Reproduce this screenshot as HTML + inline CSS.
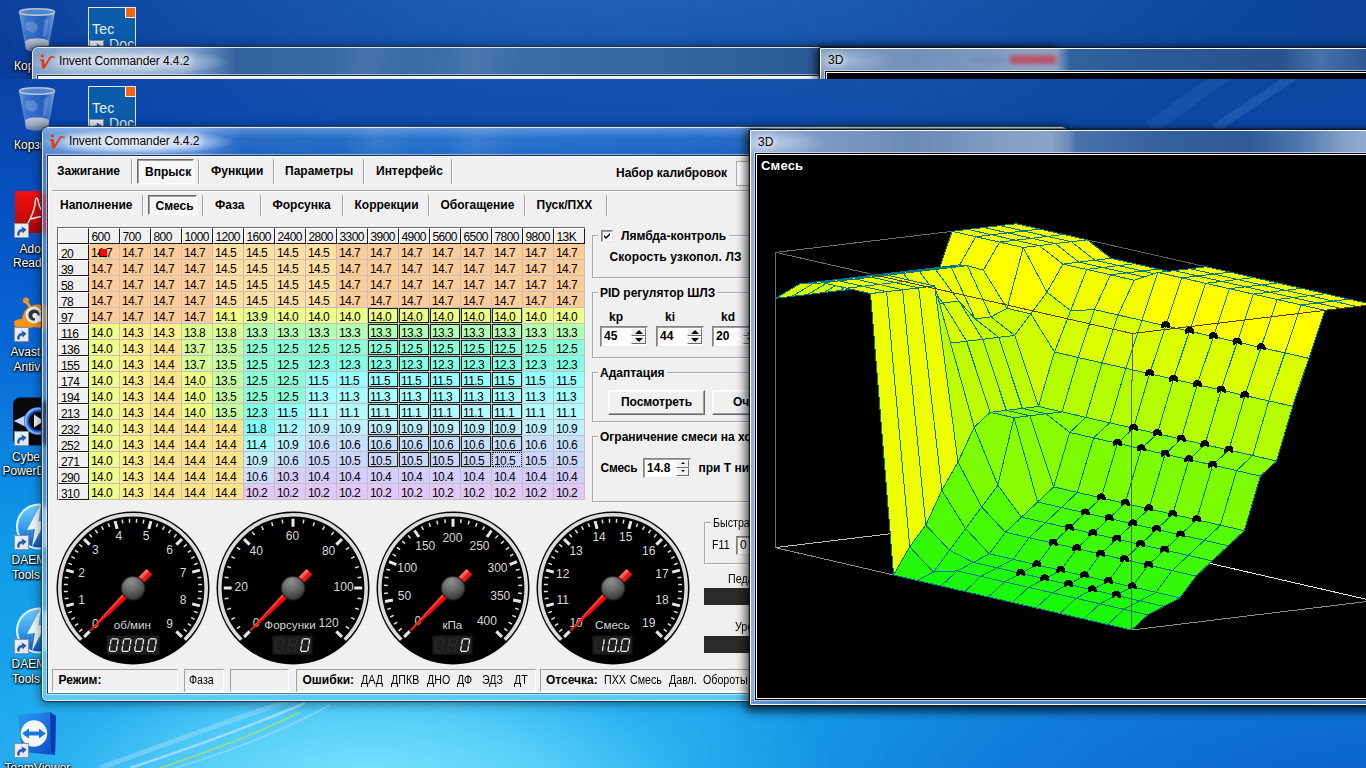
<!DOCTYPE html><html><head><meta charset="utf-8"><title>screen</title><style>
*{box-sizing:border-box;margin:0;padding:0}
html,body{width:1366px;height:768px;overflow:hidden;background:#0b4aa8;font-family:"Liberation Sans",sans-serif;font-size:12px;color:#000}
.abs{position:absolute}
#desk{position:absolute;left:0;top:0;width:1366px;height:768px;overflow:hidden;
 background:
  radial-gradient(ellipse 470px 210px at 370px 800px, rgba(128,234,255,1), rgba(96,212,250,.9) 38%, rgba(60,185,244,.45) 70%, rgba(40,170,240,0) 100%),
  radial-gradient(ellipse 760px 260px at 1400px 800px, rgba(8,84,196,.9), rgba(10,96,206,.6) 55%, rgba(16,120,220,0) 100%),
  radial-gradient(ellipse 700px 260px at 620px -60px, rgba(40,110,190,.75), rgba(30,100,190,0) 100%),
  radial-gradient(ellipse 520px 170px at 1150px 70px, rgba(12,74,150,.55), rgba(12,74,150,0) 100%),
  linear-gradient(180deg,#0a3f9e 0,#0a47ae 130px,#0650c0 200px,#0864d4 330px,#0c80e0 440px,#109ae8 540px,#18a6ec 700px,#1aa8ee 768px);}
.b{font-weight:bold}
.nw{white-space:nowrap}
.t{position:absolute;white-space:nowrap;line-height:14px}
.ilbl{position:absolute;color:#fff;font-size:12px;line-height:15px;white-space:nowrap;text-shadow:0 1px 2px #000,0 0 3px #000,1px 1px 1px rgba(0,0,0,.8)}
.sep{position:absolute;width:2px;border-left:1px solid #a0a0a0;border-right:1px solid #fff}
.gb{position:absolute;border:1px solid #a8a8a8;box-shadow:inset 1px 1px 0 #fff, 1px 1px 0 #fff}
.gb>.lg{position:absolute;top:-7px;left:7px;background:#f0f0f0;padding:0 2px;font-weight:bold;white-space:nowrap;line-height:14px}
.sunk{position:absolute;border:1px solid;border-color:#a0a0a0 #fff #fff #a0a0a0;}
.edit{position:absolute;background:#fff;border:1px solid;border-color:#828282 #e8e8e8 #e8e8e8 #828282;box-shadow:inset 1px 1px 0 #a0a0a0}
.btn{position:absolute;background:#f0f0f0;border:1px solid;border-color:#fff #696969 #696969 #fff;box-shadow:inset -1px -1px 0 #a0a0a0,inset 1px 1px 0 #f8f8f8;font-weight:bold;text-align:center}
.nx{display:inline-block;transform-origin:0 50%;transform:scaleX(.89)}
</style></head><body>
<div id="desk">
<svg class="abs" style="left:0;top:0" width="1366" height="768">
<defs><linearGradient id="stk" x1="0" y1="1" x2="1" y2="0"><stop offset="0" stop-color="#fff" stop-opacity=".0"/><stop offset=".5" stop-color="#bfe8ff" stop-opacity=".35"/><stop offset="1" stop-color="#fff" stop-opacity="0"/></linearGradient></defs>
<path d="M130,768 Q230,735 305,703" stroke="#e8f8ff" stroke-opacity=".5" stroke-width="2.5" fill="none"/>
<path d="M160,768 Q250,738 300,712" stroke="#a6e070" stroke-opacity=".85" stroke-width="1.6" fill="none"/>
<path d="M100,768 Q210,728 290,700" stroke="#d0f0ff" stroke-opacity=".3" stroke-width="5" fill="none"/>
<path d="M175,768 Q262,742 330,705" stroke="#d8f4ff" stroke-opacity=".3" stroke-width="2" fill="none"/>
<path d="M1215,128 L1366,28" stroke="#7fb0e6" stroke-opacity=".16" stroke-width="9" fill="none"/>
<path d="M1150,128 L1330,0" stroke="#7fb0e6" stroke-opacity=".1" stroke-width="14" fill="none"/>
<path d="M1260,78 L1366,8" stroke="#a8ccf0" stroke-opacity=".14" stroke-width="3" fill="none"/>
</svg>
<svg class="abs" style="left:16px;top:85px" width="42" height="48" viewBox="0 0 42 48">
<defs><linearGradient id="rba" x1="0" y1="0" x2="1" y2="0"><stop offset="0" stop-color="#86b2e6" stop-opacity=".85"/><stop offset=".2" stop-color="#4a82d6" stop-opacity=".75"/><stop offset=".7" stop-color="#3468c4" stop-opacity=".7"/><stop offset="1" stop-color="#8cb6ea" stop-opacity=".85"/></linearGradient>
<linearGradient id="rca" x1="0" y1="0" x2="0" y2="1"><stop offset="0" stop-color="#dcdcdc"/><stop offset=".5" stop-color="#b4b8c0"/><stop offset="1" stop-color="#7c8088"/></linearGradient></defs>
<path d="M3,6 L39,6 L32,44 Q21,48 10,44 Z" fill="url(#rba)"/>
<path d="M9,35.5 Q12,32 21,32.5 Q30,32 33,35.5 L32,43.5 Q21,47.5 10,43.5Z" fill="url(#rca)" fill-opacity=".82"/>
<ellipse cx="21" cy="6" rx="17.5" ry="3.2" fill="#4c86d8" stroke="#bcc0c8" stroke-width="1.5"/>
<path d="M9,18 q2,-4 6,-2 q3,-2 5,2 q3,2 1,6 q-3,4 -7,2 q-5,-2 -5,-8z" fill="#9cc0f0" fill-opacity=".35"/>
<path d="M28,14 L33,12 L30,30 L27,32Z" fill="#a8c8f4" fill-opacity=".3"/>
</svg><div class="ilbl" style="left:14px;top:137.5px">Корзина</div><div class="abs" style="left:88px;top:86px;width:48px;height:48px;background:#0b5cab;border:1px solid #dfe8f4;overflow:hidden">
<div class="abs" style="right:0;top:0;width:10px;height:10px;background:#f06414;border-left:1px solid #fff;border-bottom:1px solid #fff"></div>
<div class="abs" style="left:3px;top:14px;color:#e8f0ff;font-size:14px;line-height:14px;letter-spacing:.2px">Tec</div>
<div class="abs" style="left:20px;top:29px;color:#e8f0ff;font-size:14px;line-height:14px;letter-spacing:.2px">Doc</div>
</div><svg class="abs" style="left:89px;top:119px" width="15" height="15" viewBox="0 0 15 15"><rect x=".5" y=".5" width="14" height="14" fill="#e4ecf8" stroke="#8a8f98"/><path d="M3.2,12.5 Q2.6,6.2 8,6 L7.6,3.4 L12.6,6.6 L8.6,10.6 L8.3,8.6 Q5.2,8.6 5.6,12.5 Z" fill="#2a56a8"/><path d="M8.5,11.5 q2,.6 3.5,-.6 l0,2 l-4,0z" fill="#f2d8cc"/></svg><div class="abs" style="left:15px;top:191px;width:44px;height:42px;background:linear-gradient(180deg,#f41010 0,#d40c0c 50%,#a80606 100%)"><svg width="44" height="42" viewBox="0 0 44 42" style="position:absolute;left:0;top:0"><path d="M12,34 Q20,20 20.5,9 Q21.5,5 23,9 Q24,16 29,24 M16,28 Q22,26 30,25" stroke="#fff" stroke-width="1.4" fill="none"/></svg></div><svg class="abs" style="left:13.5px;top:222.5px" width="15" height="15" viewBox="0 0 15 15"><rect x=".5" y=".5" width="14" height="14" fill="#e4ecf8" stroke="#8a8f98"/><path d="M3.2,12.5 Q2.6,6.2 8,6 L7.6,3.4 L12.6,6.6 L8.6,10.6 L8.3,8.6 Q5.2,8.6 5.6,12.5 Z" fill="#2a56a8"/><path d="M8.5,11.5 q2,.6 3.5,-.6 l0,2 l-4,0z" fill="#f2d8cc"/></svg><div class="ilbl" style="left:19.5px;top:241.5px">Adobe</div><div class="ilbl" style="left:13px;top:256px">Reader XI</div><svg class="abs" style="left:12px;top:296px" width="48" height="36" viewBox="0 0 48 36"><circle cx="14" cy="4.5" r="3" fill="#f89412"/><path d="M14,5 L18,11" stroke="#f89412" stroke-width="3"/><path d="M2,27 q0,-4 8,-4 q2,-12 12,-14 q12,-2 18,6 q4,8 -2,14 q-8,4 -16,2 q-8,2 -14,1 q-6,0 -6,-5z" fill="#f89412"/><circle cx="22" cy="19" r="8.3" fill="#fff"/><circle cx="22" cy="19" r="7" fill="#d8dce0"/><circle cx="22" cy="19" r="5.6" fill="#2c3640"/><circle cx="23" cy="19.5" r="2.6" fill="#fff"/><rect x="23" y="19.5" width="6" height="6" fill="#fff"/></svg><svg class="abs" style="left:13.5px;top:326.5px" width="15" height="15" viewBox="0 0 15 15"><rect x=".5" y=".5" width="14" height="14" fill="#e4ecf8" stroke="#8a8f98"/><path d="M3.2,12.5 Q2.6,6.2 8,6 L7.6,3.4 L12.6,6.6 L8.6,10.6 L8.3,8.6 Q5.2,8.6 5.6,12.5 Z" fill="#2a56a8"/><path d="M8.5,11.5 q2,.6 3.5,-.6 l0,2 l-4,0z" fill="#f2d8cc"/></svg><div class="ilbl" style="left:10.5px;top:345px">Avast</div><div class="ilbl" style="left:13.5px;top:360px">Antivirus</div><svg class="abs" style="left:13px;top:397px" width="48" height="49" viewBox="0 0 48 49"><defs><radialGradient id="pd1" cx=".5" cy=".5" r=".5"><stop offset=".6" stop-color="#0a1a60"/><stop offset=".78" stop-color="#2a7cf4"/><stop offset=".9" stop-color="#9cc8ff"/><stop offset="1" stop-color="#1c50c0"/></radialGradient></defs><rect x="0" y="0.5" width="48" height="48" rx="7" fill="#0a0a0c"/><path d="M1,24 L14,18 L14,30Z" fill="#e8f0ff"/><path d="M1,24 L20,14 L20,34Z" fill="#a8c4f8" fill-opacity=".6"/><circle cx="25" cy="24" r="14" fill="url(#pd1)"/><circle cx="25" cy="24" r="8.8" fill="#0c0c10"/><path d="M21,17.5 L31,24 L21,30.5Z" fill="#f0f0f0"/></svg><svg class="abs" style="left:13.5px;top:431px" width="15" height="15" viewBox="0 0 15 15"><rect x=".5" y=".5" width="14" height="14" fill="#e4ecf8" stroke="#8a8f98"/><path d="M3.2,12.5 Q2.6,6.2 8,6 L7.6,3.4 L12.6,6.6 L8.6,10.6 L8.3,8.6 Q5.2,8.6 5.6,12.5 Z" fill="#2a56a8"/><path d="M8.5,11.5 q2,.6 3.5,-.6 l0,2 l-4,0z" fill="#f2d8cc"/></svg><div class="ilbl" style="left:12px;top:449.5px">CyberLink</div><div class="ilbl" style="left:2.5px;top:464px">PowerDVD 12</div><svg class="abs" style="left:13px;top:503px" width="52" height="48" viewBox="0 0 52 48"><defs><linearGradient id="dm0" x1="0" y1="0" x2="0" y2="1"><stop offset="0" stop-color="#6cd0fa"/><stop offset=".5" stop-color="#3a9cec"/><stop offset="1" stop-color="#1058b8"/></linearGradient></defs>
<circle cx="26" cy="23.5" r="23" fill="#eaf4fc"/><circle cx="26" cy="23.5" r="21" fill="url(#dm0)"/>
<path d="M28,1 L14,27 L22,26 L19,44 L33,17 L25.5,18.5 Z" fill="#f4f8fc"/></svg><svg class="abs" style="left:13.5px;top:534.5px" width="15" height="15" viewBox="0 0 15 15"><rect x=".5" y=".5" width="14" height="14" fill="#e4ecf8" stroke="#8a8f98"/><path d="M3.2,12.5 Q2.6,6.2 8,6 L7.6,3.4 L12.6,6.6 L8.6,10.6 L8.3,8.6 Q5.2,8.6 5.6,12.5 Z" fill="#2a56a8"/><path d="M8.5,11.5 q2,.6 3.5,-.6 l0,2 l-4,0z" fill="#f2d8cc"/></svg><div class="ilbl" style="left:11.5px;top:553px">DAEMON</div><div class="ilbl" style="left:12px;top:568px">Tools Lite</div><svg class="abs" style="left:13px;top:607px" width="52" height="48" viewBox="0 0 52 48"><defs><linearGradient id="dm1" x1="0" y1="0" x2="0" y2="1"><stop offset="0" stop-color="#6cd0fa"/><stop offset=".5" stop-color="#3a9cec"/><stop offset="1" stop-color="#1058b8"/></linearGradient></defs>
<circle cx="26" cy="23.5" r="23" fill="#eaf4fc"/><circle cx="26" cy="23.5" r="21" fill="url(#dm1)"/>
<path d="M28,1 L14,27 L22,26 L19,44 L33,17 L25.5,18.5 Z" fill="#f4f8fc"/></svg><svg class="abs" style="left:13.5px;top:638.5px" width="15" height="15" viewBox="0 0 15 15"><rect x=".5" y=".5" width="14" height="14" fill="#e4ecf8" stroke="#8a8f98"/><path d="M3.2,12.5 Q2.6,6.2 8,6 L7.6,3.4 L12.6,6.6 L8.6,10.6 L8.3,8.6 Q5.2,8.6 5.6,12.5 Z" fill="#2a56a8"/><path d="M8.5,11.5 q2,.6 3.5,-.6 l0,2 l-4,0z" fill="#f2d8cc"/></svg><div class="ilbl" style="left:11.5px;top:657px">DAEMON</div><div class="ilbl" style="left:12px;top:672px">Tools Lite</div><svg class="abs" style="left:17px;top:711px" width="40" height="46" viewBox="0 0 40 46"><defs><linearGradient id="tv1" x1="0" y1="0" x2="1" y2="1"><stop offset="0" stop-color="#2a9cf4"/><stop offset="1" stop-color="#0c48c0"/></linearGradient></defs><path d="M1,4 L33,1 L39,5 L38,44 L5,41Z" fill="url(#tv1)"/><path d="M33,1 L39,5 L38,44 L34,40Z" fill="#0a3cb0"/><circle cx="17" cy="22.5" r="13.2" fill="#f4f8fc"/><path d="M5,22.5 L12,17.5 L12,20.5 L22,20.5 L22,17.5 L29,22.5 L22,27.5 L22,24.5 L12,24.5 L12,27.5Z" fill="#1a78e0"/></svg><svg class="abs" style="left:13.5px;top:742.5px" width="15" height="15" viewBox="0 0 15 15"><rect x=".5" y=".5" width="14" height="14" fill="#e4ecf8" stroke="#8a8f98"/><path d="M3.2,12.5 Q2.6,6.2 8,6 L7.6,3.4 L12.6,6.6 L8.6,10.6 L8.3,8.6 Q5.2,8.6 5.6,12.5 Z" fill="#2a56a8"/><path d="M8.5,11.5 q2,.6 3.5,-.6 l0,2 l-4,0z" fill="#f2d8cc"/></svg><div class="ilbl" style="left:4.5px;top:760.5px">TeamViewer</div>
<div class="abs" style="left:41px;top:126px;width:1028px;height:576px;border-radius:7px 7px 6px 6px;border:1px solid rgba(20,30,50,.75);box-shadow:0 0 0 1px rgba(0,0,0,.08),0 1px 10px 2px rgba(0,0,0,.35);background:linear-gradient(90deg,rgba(255,255,255,.0) 0,rgba(255,255,255,0) 100%),linear-gradient(180deg,rgba(90,150,225,.0) 0,rgba(90,150,225,0) 28px,rgba(70,170,240,.3) 60%,rgba(100,222,255,.8) 100%),linear-gradient(90deg,rgba(74,128,208,1) 0,rgba(60,125,205,1) 100%);overflow:hidden"><div class="abs" style="left:0;top:0;right:0;bottom:0;border-radius:6px 6px 5px 5px;border:1px solid rgba(255,255,255,.8)"></div><div class="abs" style="left:1px;top:66px;width:6px;height:40px;background:#d02828;filter:blur(2px);opacity:.7"></div><div class="abs" style="left:1px;top:178px;width:6px;height:24px;background:#f09a28;filter:blur(2px);opacity:.7"></div><div class="abs" style="left:1px;top:274px;width:6px;height:44px;background:#10141c;filter:blur(2px);opacity:.7"></div><div class="abs" style="left:1px;top:380px;width:6px;height:40px;background:#d8ecfc;filter:blur(2px);opacity:.7"></div><div class="abs" style="left:1px;top:484px;width:6px;height:40px;background:#d8ecfc;filter:blur(2px);opacity:.7"></div><div class="abs" style="left:1px;top:1px;width:1026px;height:28px;background:radial-gradient(ellipse 100px 13px at 92px 14px,rgba(228,238,250,.95) 0,rgba(206,222,244,.85) 55%,rgba(150,190,235,0) 100%),linear-gradient(180deg,rgba(255,255,255,.28) 0,rgba(255,255,255,.05) 10px,rgba(255,255,255,0) 100%),linear-gradient(100deg,rgba(255,255,255,0) 300px,rgba(255,255,255,.07) 330px,rgba(255,255,255,0) 370px,rgba(255,255,255,0) 400px,rgba(255,255,255,.07) 430px,rgba(255,255,255,0) 470px),linear-gradient(90deg,rgba(84,138,214,1) 0,rgba(98,150,222,1) 40px,rgba(88,144,222,1) 150px,rgba(52,114,204,1) 178px,rgba(30,100,194,1) 200px,rgba(30,104,198,1) 300px,rgba(34,110,204,1) 420px,rgba(28,98,194,1) 720px,rgba(120,150,200,1) 730px,rgba(120,150,200,1) 100%)"></div><svg class="abs" style="left:6.5px;top:7px" width="18" height="17" viewBox="0 0 17 16"><circle cx="3.2" cy="1.7" r="1.5" fill="#e8380c"/><path d="M0.6,5.2 L4.6,4.6 L5.4,10.2 L9.6,3.2 Q10.2,2.2 11.4,2.2 L14.8,2.0 L14.6,3.6 L11.8,3.8 Q11.2,3.8 10.8,4.6 L5.2,14 L3.0,14 L2.2,6.4 L0.8,6.6 Z" fill="#e8380c"/></svg><div class="t" style="left:27px;top:7px;font-size:12px;letter-spacing:-.08px;text-shadow:0 0 6px #fff,0 0 8px #fff,0 0 10px rgba(255,255,255,.9)">Invent Commander 4.4.2</div></div><div class="abs" style="left:46px;top:154px;width:1016px;height:541px;border:1px solid rgba(255,255,255,.5);background:#f0f0f0;background-clip:padding-box"><div class="abs" style="left:0;top:0;right:0;bottom:0;border:1px solid #26374f;border-top-color:#1c2c44;border-bottom-color:#4a86a8"></div><div class="abs" style="left:1px;top:1px;right:1px;bottom:1px;border:1px solid #fff;border-right:0;border-bottom-color:#fdfdfd"></div></div><div class="t b" style="left:57px;top:164px;">Зажигание</div><div class="t b" style="left:211px;top:164px;">Функции</div><div class="t b" style="left:285px;top:164px;">Параметры</div><div class="t b" style="left:376px;top:164px;">Интерфейс</div><div class="sep" style="left:131px;top:159px;height:25px"></div><div class="sep" style="left:198px;top:159px;height:25px"></div><div class="sep" style="left:273px;top:159px;height:25px"></div><div class="sep" style="left:363px;top:159px;height:25px"></div><div class="sep" style="left:451px;top:159px;height:25px"></div><div class="abs" style="left:137px;top:159px;width:57px;height:25px;border:1px solid;border-color:#696969 #fff #fff #696969;box-shadow:inset 1px 1px 0 #a0a0a0;background:#f6f6f6"></div><div class="t b" style="left:145px;top:165px;">Впрыск</div><div class="t b" style="left:616px;top:166px;">Набор калибровок</div><div class="abs" style="left:736px;top:161px;width:40px;height:25px;background:#fff;border:1px solid #a8a8a8"></div><div class="abs" style="left:52px;top:190px;width:720px;height:2px;border-top:1px solid #a0a0a0;border-bottom:1px solid #fff"></div><div class="t b" style="left:60px;top:198px;">Наполнение</div><div class="t b" style="left:215px;top:198px;">Фаза</div><div class="t b" style="left:272.5px;top:198px;">Форсунка</div><div class="t b" style="left:354.5px;top:198px;">Коррекции</div><div class="t b" style="left:440.5px;top:198px;">Обогащение</div><div class="t b" style="left:536.5px;top:198px;">Пуск/ПХХ</div><div class="sep" style="left:142px;top:195px;height:21px"></div><div class="sep" style="left:202px;top:195px;height:21px"></div><div class="sep" style="left:260px;top:195px;height:21px"></div><div class="sep" style="left:342px;top:195px;height:21px"></div><div class="sep" style="left:428px;top:195px;height:21px"></div><div class="sep" style="left:524px;top:195px;height:21px"></div><div class="sep" style="left:606px;top:195px;height:21px"></div><div class="abs" style="left:148px;top:195px;width:49px;height:20px;border:1px solid;border-color:#696969 #fff #fff #696969;box-shadow:inset 1px 1px 0 #a0a0a0;background:#f6f6f6"></div><div class="t b" style="left:155.5px;top:199px;">Смесь</div><div class="abs" style="left:57px;top:227px;width:528px;height:273px;background:#c0c0c0;border-left:1px solid #696969;border-top:1px solid #696969;font-size:12px;letter-spacing:-.6px;line-height:15px"><div style="position:absolute;background:#f0f0f0;border:1px solid;border-color:#fff #1c1c1c #1c1c1c #fff;padding-left:1.5px;padding-top:2px;height:16px;overflow:hidden;white-space:nowrap;left:0;top:0;width:31px"></div><div style="position:absolute;background:#f0f0f0;border:1px solid;border-color:#fff #1c1c1c #1c1c1c #fff;padding-left:1.5px;padding-top:2px;height:16px;overflow:hidden;white-space:nowrap;left:31px;top:0;width:31px;padding-top:1px">600</div><div style="position:absolute;background:#f0f0f0;border:1px solid;border-color:#fff #1c1c1c #1c1c1c #fff;padding-left:1.5px;padding-top:2px;height:16px;overflow:hidden;white-space:nowrap;left:62px;top:0;width:31px;padding-top:1px">700</div><div style="position:absolute;background:#f0f0f0;border:1px solid;border-color:#fff #1c1c1c #1c1c1c #fff;padding-left:1.5px;padding-top:2px;height:16px;overflow:hidden;white-space:nowrap;left:93px;top:0;width:31px;padding-top:1px">800</div><div style="position:absolute;background:#f0f0f0;border:1px solid;border-color:#fff #1c1c1c #1c1c1c #fff;padding-left:1.5px;padding-top:2px;height:16px;overflow:hidden;white-space:nowrap;left:124px;top:0;width:31px;padding-top:1px">1000</div><div style="position:absolute;background:#f0f0f0;border:1px solid;border-color:#fff #1c1c1c #1c1c1c #fff;padding-left:1.5px;padding-top:2px;height:16px;overflow:hidden;white-space:nowrap;left:155px;top:0;width:31px;padding-top:1px">1200</div><div style="position:absolute;background:#f0f0f0;border:1px solid;border-color:#fff #1c1c1c #1c1c1c #fff;padding-left:1.5px;padding-top:2px;height:16px;overflow:hidden;white-space:nowrap;left:186px;top:0;width:31px;padding-top:1px">1600</div><div style="position:absolute;background:#f0f0f0;border:1px solid;border-color:#fff #1c1c1c #1c1c1c #fff;padding-left:1.5px;padding-top:2px;height:16px;overflow:hidden;white-space:nowrap;left:217px;top:0;width:31px;padding-top:1px">2400</div><div style="position:absolute;background:#f0f0f0;border:1px solid;border-color:#fff #1c1c1c #1c1c1c #fff;padding-left:1.5px;padding-top:2px;height:16px;overflow:hidden;white-space:nowrap;left:248px;top:0;width:31px;padding-top:1px">2800</div><div style="position:absolute;background:#f0f0f0;border:1px solid;border-color:#fff #1c1c1c #1c1c1c #fff;padding-left:1.5px;padding-top:2px;height:16px;overflow:hidden;white-space:nowrap;left:279px;top:0;width:31px;padding-top:1px">3300</div><div style="position:absolute;background:#f0f0f0;border:1px solid;border-color:#fff #1c1c1c #1c1c1c #fff;padding-left:1.5px;padding-top:2px;height:16px;overflow:hidden;white-space:nowrap;left:310px;top:0;width:31px;padding-top:1px">3900</div><div style="position:absolute;background:#f0f0f0;border:1px solid;border-color:#fff #1c1c1c #1c1c1c #fff;padding-left:1.5px;padding-top:2px;height:16px;overflow:hidden;white-space:nowrap;left:341px;top:0;width:31px;padding-top:1px">4900</div><div style="position:absolute;background:#f0f0f0;border:1px solid;border-color:#fff #1c1c1c #1c1c1c #fff;padding-left:1.5px;padding-top:2px;height:16px;overflow:hidden;white-space:nowrap;left:372px;top:0;width:31px;padding-top:1px">5600</div><div style="position:absolute;background:#f0f0f0;border:1px solid;border-color:#fff #1c1c1c #1c1c1c #fff;padding-left:1.5px;padding-top:2px;height:16px;overflow:hidden;white-space:nowrap;left:403px;top:0;width:31px;padding-top:1px">6500</div><div style="position:absolute;background:#f0f0f0;border:1px solid;border-color:#fff #1c1c1c #1c1c1c #fff;padding-left:1.5px;padding-top:2px;height:16px;overflow:hidden;white-space:nowrap;left:434px;top:0;width:31px;padding-top:1px">7800</div><div style="position:absolute;background:#f0f0f0;border:1px solid;border-color:#fff #1c1c1c #1c1c1c #fff;padding-left:1.5px;padding-top:2px;height:16px;overflow:hidden;white-space:nowrap;left:465px;top:0;width:31px;padding-top:1px">9800</div><div style="position:absolute;background:#f0f0f0;border:1px solid;border-color:#fff #1c1c1c #1c1c1c #fff;padding-left:1.5px;padding-top:2px;height:16px;overflow:hidden;white-space:nowrap;left:496px;top:0;width:31px;padding-top:1px">13K</div><div style="position:absolute;background:#f0f0f0;border:1px solid;border-color:#fff #1c1c1c #1c1c1c #fff;padding-left:1.5px;padding-top:2px;height:16px;overflow:hidden;white-space:nowrap;left:0;top:16px;width:31px;padding-left:2px">20</div><div style="position:absolute;background:#f0f0f0;border:1px solid;border-color:#fff #1c1c1c #1c1c1c #fff;padding-left:1.5px;padding-top:2px;height:16px;overflow:hidden;white-space:nowrap;left:0;top:32px;width:31px;padding-left:2px">39</div><div style="position:absolute;background:#f0f0f0;border:1px solid;border-color:#fff #1c1c1c #1c1c1c #fff;padding-left:1.5px;padding-top:2px;height:16px;overflow:hidden;white-space:nowrap;left:0;top:48px;width:31px;padding-left:2px">58</div><div style="position:absolute;background:#f0f0f0;border:1px solid;border-color:#fff #1c1c1c #1c1c1c #fff;padding-left:1.5px;padding-top:2px;height:16px;overflow:hidden;white-space:nowrap;left:0;top:64px;width:31px;padding-left:2px">78</div><div style="position:absolute;background:#f0f0f0;border:1px solid;border-color:#fff #1c1c1c #1c1c1c #fff;padding-left:1.5px;padding-top:2px;height:16px;overflow:hidden;white-space:nowrap;left:0;top:80px;width:31px;padding-left:2px">97</div><div style="position:absolute;background:#f0f0f0;border:1px solid;border-color:#fff #1c1c1c #1c1c1c #fff;padding-left:1.5px;padding-top:2px;height:16px;overflow:hidden;white-space:nowrap;left:0;top:96px;width:31px;padding-left:2px">116</div><div style="position:absolute;background:#f0f0f0;border:1px solid;border-color:#fff #1c1c1c #1c1c1c #fff;padding-left:1.5px;padding-top:2px;height:16px;overflow:hidden;white-space:nowrap;left:0;top:112px;width:31px;padding-left:2px">136</div><div style="position:absolute;background:#f0f0f0;border:1px solid;border-color:#fff #1c1c1c #1c1c1c #fff;padding-left:1.5px;padding-top:2px;height:16px;overflow:hidden;white-space:nowrap;left:0;top:128px;width:31px;padding-left:2px">155</div><div style="position:absolute;background:#f0f0f0;border:1px solid;border-color:#fff #1c1c1c #1c1c1c #fff;padding-left:1.5px;padding-top:2px;height:16px;overflow:hidden;white-space:nowrap;left:0;top:144px;width:31px;padding-left:2px">174</div><div style="position:absolute;background:#f0f0f0;border:1px solid;border-color:#fff #1c1c1c #1c1c1c #fff;padding-left:1.5px;padding-top:2px;height:16px;overflow:hidden;white-space:nowrap;left:0;top:160px;width:31px;padding-left:2px">194</div><div style="position:absolute;background:#f0f0f0;border:1px solid;border-color:#fff #1c1c1c #1c1c1c #fff;padding-left:1.5px;padding-top:2px;height:16px;overflow:hidden;white-space:nowrap;left:0;top:176px;width:31px;padding-left:2px">213</div><div style="position:absolute;background:#f0f0f0;border:1px solid;border-color:#fff #1c1c1c #1c1c1c #fff;padding-left:1.5px;padding-top:2px;height:16px;overflow:hidden;white-space:nowrap;left:0;top:192px;width:31px;padding-left:2px">232</div><div style="position:absolute;background:#f0f0f0;border:1px solid;border-color:#fff #1c1c1c #1c1c1c #fff;padding-left:1.5px;padding-top:2px;height:16px;overflow:hidden;white-space:nowrap;left:0;top:208px;width:31px;padding-left:2px">252</div><div style="position:absolute;background:#f0f0f0;border:1px solid;border-color:#fff #1c1c1c #1c1c1c #fff;padding-left:1.5px;padding-top:2px;height:16px;overflow:hidden;white-space:nowrap;left:0;top:224px;width:31px;padding-left:2px">271</div><div style="position:absolute;background:#f0f0f0;border:1px solid;border-color:#fff #1c1c1c #1c1c1c #fff;padding-left:1.5px;padding-top:2px;height:16px;overflow:hidden;white-space:nowrap;left:0;top:240px;width:31px;padding-left:2px">290</div><div style="position:absolute;background:#f0f0f0;border:1px solid;border-color:#fff #1c1c1c #1c1c1c #fff;padding-left:1.5px;padding-top:2px;height:16px;overflow:hidden;white-space:nowrap;left:0;top:256px;width:31px;padding-left:2px">310</div><div style="position:absolute;left:31px;top:16px;width:30px;height:15px;background:#ffcc99;padding-left:2px;padding-top:2px;overflow:hidden;white-space:nowrap">14.7</div><div style="position:absolute;left:62px;top:16px;width:30px;height:15px;background:#ffcc99;padding-left:2px;padding-top:2px;overflow:hidden;white-space:nowrap">14.7</div><div style="position:absolute;left:93px;top:16px;width:30px;height:15px;background:#ffcc99;padding-left:2px;padding-top:2px;overflow:hidden;white-space:nowrap">14.7</div><div style="position:absolute;left:124px;top:16px;width:30px;height:15px;background:#ffcc99;padding-left:2px;padding-top:2px;overflow:hidden;white-space:nowrap">14.7</div><div style="position:absolute;left:155px;top:16px;width:30px;height:15px;background:#ffe0a0;padding-left:2px;padding-top:2px;overflow:hidden;white-space:nowrap">14.5</div><div style="position:absolute;left:186px;top:16px;width:30px;height:15px;background:#ffe0a0;padding-left:2px;padding-top:2px;overflow:hidden;white-space:nowrap">14.5</div><div style="position:absolute;left:217px;top:16px;width:30px;height:15px;background:#ffe0a0;padding-left:2px;padding-top:2px;overflow:hidden;white-space:nowrap">14.5</div><div style="position:absolute;left:248px;top:16px;width:30px;height:15px;background:#ffe0a0;padding-left:2px;padding-top:2px;overflow:hidden;white-space:nowrap">14.5</div><div style="position:absolute;left:279px;top:16px;width:30px;height:15px;background:#ffcc99;padding-left:2px;padding-top:2px;overflow:hidden;white-space:nowrap">14.7</div><div style="position:absolute;left:310px;top:16px;width:30px;height:15px;background:#ffcc99;padding-left:2px;padding-top:2px;overflow:hidden;white-space:nowrap">14.7</div><div style="position:absolute;left:341px;top:16px;width:30px;height:15px;background:#ffcc99;padding-left:2px;padding-top:2px;overflow:hidden;white-space:nowrap">14.7</div><div style="position:absolute;left:372px;top:16px;width:30px;height:15px;background:#ffcc99;padding-left:2px;padding-top:2px;overflow:hidden;white-space:nowrap">14.7</div><div style="position:absolute;left:403px;top:16px;width:30px;height:15px;background:#ffcc99;padding-left:2px;padding-top:2px;overflow:hidden;white-space:nowrap">14.7</div><div style="position:absolute;left:434px;top:16px;width:30px;height:15px;background:#ffcc99;padding-left:2px;padding-top:2px;overflow:hidden;white-space:nowrap">14.7</div><div style="position:absolute;left:465px;top:16px;width:30px;height:15px;background:#ffcc99;padding-left:2px;padding-top:2px;overflow:hidden;white-space:nowrap">14.7</div><div style="position:absolute;left:496px;top:16px;width:30px;height:15px;background:#ffcc99;padding-left:2px;padding-top:2px;overflow:hidden;white-space:nowrap">14.7</div><div style="position:absolute;left:31px;top:32px;width:30px;height:15px;background:#ffcc99;padding-left:2px;padding-top:2px;overflow:hidden;white-space:nowrap">14.7</div><div style="position:absolute;left:62px;top:32px;width:30px;height:15px;background:#ffcc99;padding-left:2px;padding-top:2px;overflow:hidden;white-space:nowrap">14.7</div><div style="position:absolute;left:93px;top:32px;width:30px;height:15px;background:#ffcc99;padding-left:2px;padding-top:2px;overflow:hidden;white-space:nowrap">14.7</div><div style="position:absolute;left:124px;top:32px;width:30px;height:15px;background:#ffcc99;padding-left:2px;padding-top:2px;overflow:hidden;white-space:nowrap">14.7</div><div style="position:absolute;left:155px;top:32px;width:30px;height:15px;background:#ffe0a0;padding-left:2px;padding-top:2px;overflow:hidden;white-space:nowrap">14.5</div><div style="position:absolute;left:186px;top:32px;width:30px;height:15px;background:#ffe0a0;padding-left:2px;padding-top:2px;overflow:hidden;white-space:nowrap">14.5</div><div style="position:absolute;left:217px;top:32px;width:30px;height:15px;background:#ffe0a0;padding-left:2px;padding-top:2px;overflow:hidden;white-space:nowrap">14.5</div><div style="position:absolute;left:248px;top:32px;width:30px;height:15px;background:#ffe0a0;padding-left:2px;padding-top:2px;overflow:hidden;white-space:nowrap">14.5</div><div style="position:absolute;left:279px;top:32px;width:30px;height:15px;background:#ffcc99;padding-left:2px;padding-top:2px;overflow:hidden;white-space:nowrap">14.7</div><div style="position:absolute;left:310px;top:32px;width:30px;height:15px;background:#ffcc99;padding-left:2px;padding-top:2px;overflow:hidden;white-space:nowrap">14.7</div><div style="position:absolute;left:341px;top:32px;width:30px;height:15px;background:#ffcc99;padding-left:2px;padding-top:2px;overflow:hidden;white-space:nowrap">14.7</div><div style="position:absolute;left:372px;top:32px;width:30px;height:15px;background:#ffcc99;padding-left:2px;padding-top:2px;overflow:hidden;white-space:nowrap">14.7</div><div style="position:absolute;left:403px;top:32px;width:30px;height:15px;background:#ffcc99;padding-left:2px;padding-top:2px;overflow:hidden;white-space:nowrap">14.7</div><div style="position:absolute;left:434px;top:32px;width:30px;height:15px;background:#ffcc99;padding-left:2px;padding-top:2px;overflow:hidden;white-space:nowrap">14.7</div><div style="position:absolute;left:465px;top:32px;width:30px;height:15px;background:#ffcc99;padding-left:2px;padding-top:2px;overflow:hidden;white-space:nowrap">14.7</div><div style="position:absolute;left:496px;top:32px;width:30px;height:15px;background:#ffcc99;padding-left:2px;padding-top:2px;overflow:hidden;white-space:nowrap">14.7</div><div style="position:absolute;left:31px;top:48px;width:30px;height:15px;background:#ffcc99;padding-left:2px;padding-top:2px;overflow:hidden;white-space:nowrap">14.7</div><div style="position:absolute;left:62px;top:48px;width:30px;height:15px;background:#ffcc99;padding-left:2px;padding-top:2px;overflow:hidden;white-space:nowrap">14.7</div><div style="position:absolute;left:93px;top:48px;width:30px;height:15px;background:#ffcc99;padding-left:2px;padding-top:2px;overflow:hidden;white-space:nowrap">14.7</div><div style="position:absolute;left:124px;top:48px;width:30px;height:15px;background:#ffcc99;padding-left:2px;padding-top:2px;overflow:hidden;white-space:nowrap">14.7</div><div style="position:absolute;left:155px;top:48px;width:30px;height:15px;background:#ffe0a0;padding-left:2px;padding-top:2px;overflow:hidden;white-space:nowrap">14.5</div><div style="position:absolute;left:186px;top:48px;width:30px;height:15px;background:#ffe0a0;padding-left:2px;padding-top:2px;overflow:hidden;white-space:nowrap">14.5</div><div style="position:absolute;left:217px;top:48px;width:30px;height:15px;background:#ffe0a0;padding-left:2px;padding-top:2px;overflow:hidden;white-space:nowrap">14.5</div><div style="position:absolute;left:248px;top:48px;width:30px;height:15px;background:#ffe0a0;padding-left:2px;padding-top:2px;overflow:hidden;white-space:nowrap">14.5</div><div style="position:absolute;left:279px;top:48px;width:30px;height:15px;background:#ffcc99;padding-left:2px;padding-top:2px;overflow:hidden;white-space:nowrap">14.7</div><div style="position:absolute;left:310px;top:48px;width:30px;height:15px;background:#ffcc99;padding-left:2px;padding-top:2px;overflow:hidden;white-space:nowrap">14.7</div><div style="position:absolute;left:341px;top:48px;width:30px;height:15px;background:#ffcc99;padding-left:2px;padding-top:2px;overflow:hidden;white-space:nowrap">14.7</div><div style="position:absolute;left:372px;top:48px;width:30px;height:15px;background:#ffcc99;padding-left:2px;padding-top:2px;overflow:hidden;white-space:nowrap">14.7</div><div style="position:absolute;left:403px;top:48px;width:30px;height:15px;background:#ffcc99;padding-left:2px;padding-top:2px;overflow:hidden;white-space:nowrap">14.7</div><div style="position:absolute;left:434px;top:48px;width:30px;height:15px;background:#ffcc99;padding-left:2px;padding-top:2px;overflow:hidden;white-space:nowrap">14.7</div><div style="position:absolute;left:465px;top:48px;width:30px;height:15px;background:#ffcc99;padding-left:2px;padding-top:2px;overflow:hidden;white-space:nowrap">14.7</div><div style="position:absolute;left:496px;top:48px;width:30px;height:15px;background:#ffcc99;padding-left:2px;padding-top:2px;overflow:hidden;white-space:nowrap">14.7</div><div style="position:absolute;left:31px;top:64px;width:30px;height:15px;background:#ffcc99;padding-left:2px;padding-top:2px;overflow:hidden;white-space:nowrap">14.7</div><div style="position:absolute;left:62px;top:64px;width:30px;height:15px;background:#ffcc99;padding-left:2px;padding-top:2px;overflow:hidden;white-space:nowrap">14.7</div><div style="position:absolute;left:93px;top:64px;width:30px;height:15px;background:#ffcc99;padding-left:2px;padding-top:2px;overflow:hidden;white-space:nowrap">14.7</div><div style="position:absolute;left:124px;top:64px;width:30px;height:15px;background:#ffcc99;padding-left:2px;padding-top:2px;overflow:hidden;white-space:nowrap">14.7</div><div style="position:absolute;left:155px;top:64px;width:30px;height:15px;background:#ffe0a0;padding-left:2px;padding-top:2px;overflow:hidden;white-space:nowrap">14.5</div><div style="position:absolute;left:186px;top:64px;width:30px;height:15px;background:#ffe0a0;padding-left:2px;padding-top:2px;overflow:hidden;white-space:nowrap">14.5</div><div style="position:absolute;left:217px;top:64px;width:30px;height:15px;background:#ffe0a0;padding-left:2px;padding-top:2px;overflow:hidden;white-space:nowrap">14.5</div><div style="position:absolute;left:248px;top:64px;width:30px;height:15px;background:#ffe0a0;padding-left:2px;padding-top:2px;overflow:hidden;white-space:nowrap">14.5</div><div style="position:absolute;left:279px;top:64px;width:30px;height:15px;background:#ffcc99;padding-left:2px;padding-top:2px;overflow:hidden;white-space:nowrap">14.7</div><div style="position:absolute;left:310px;top:64px;width:30px;height:15px;background:#ffcc99;padding-left:2px;padding-top:2px;overflow:hidden;white-space:nowrap">14.7</div><div style="position:absolute;left:341px;top:64px;width:30px;height:15px;background:#ffcc99;padding-left:2px;padding-top:2px;overflow:hidden;white-space:nowrap">14.7</div><div style="position:absolute;left:372px;top:64px;width:30px;height:15px;background:#ffcc99;padding-left:2px;padding-top:2px;overflow:hidden;white-space:nowrap">14.7</div><div style="position:absolute;left:403px;top:64px;width:30px;height:15px;background:#ffcc99;padding-left:2px;padding-top:2px;overflow:hidden;white-space:nowrap">14.7</div><div style="position:absolute;left:434px;top:64px;width:30px;height:15px;background:#ffcc99;padding-left:2px;padding-top:2px;overflow:hidden;white-space:nowrap">14.7</div><div style="position:absolute;left:465px;top:64px;width:30px;height:15px;background:#ffcc99;padding-left:2px;padding-top:2px;overflow:hidden;white-space:nowrap">14.7</div><div style="position:absolute;left:496px;top:64px;width:30px;height:15px;background:#ffcc99;padding-left:2px;padding-top:2px;overflow:hidden;white-space:nowrap">14.7</div><div style="position:absolute;left:31px;top:80px;width:30px;height:15px;background:#ffcc99;padding-left:2px;padding-top:2px;overflow:hidden;white-space:nowrap">14.7</div><div style="position:absolute;left:62px;top:80px;width:30px;height:15px;background:#ffcc99;padding-left:2px;padding-top:2px;overflow:hidden;white-space:nowrap">14.7</div><div style="position:absolute;left:93px;top:80px;width:30px;height:15px;background:#ffcc99;padding-left:2px;padding-top:2px;overflow:hidden;white-space:nowrap">14.7</div><div style="position:absolute;left:124px;top:80px;width:30px;height:15px;background:#ffcc99;padding-left:2px;padding-top:2px;overflow:hidden;white-space:nowrap">14.7</div><div style="position:absolute;left:155px;top:80px;width:30px;height:15px;background:#f6f884;padding-left:2px;padding-top:2px;overflow:hidden;white-space:nowrap">14.1</div><div style="position:absolute;left:186px;top:80px;width:30px;height:15px;background:#e4ff90;padding-left:2px;padding-top:2px;overflow:hidden;white-space:nowrap">13.9</div><div style="position:absolute;left:217px;top:80px;width:30px;height:15px;background:#eeff88;padding-left:2px;padding-top:2px;overflow:hidden;white-space:nowrap">14.0</div><div style="position:absolute;left:248px;top:80px;width:30px;height:15px;background:#eeff88;padding-left:2px;padding-top:2px;overflow:hidden;white-space:nowrap">14.0</div><div style="position:absolute;left:279px;top:80px;width:30px;height:15px;background:#eeff88;padding-left:2px;padding-top:2px;overflow:hidden;white-space:nowrap">14.0</div><div style="position:absolute;left:310px;top:80px;width:30px;height:15px;background:#eeff88;padding-left:2px;padding-top:2px;overflow:hidden;white-space:nowrap;box-shadow:inset 0 0 0 1px #202020;">14.0</div><div style="position:absolute;left:341px;top:80px;width:30px;height:15px;background:#eeff88;padding-left:2px;padding-top:2px;overflow:hidden;white-space:nowrap;box-shadow:inset 0 0 0 1px #202020;">14.0</div><div style="position:absolute;left:372px;top:80px;width:30px;height:15px;background:#eeff88;padding-left:2px;padding-top:2px;overflow:hidden;white-space:nowrap;box-shadow:inset 0 0 0 1px #202020;">14.0</div><div style="position:absolute;left:403px;top:80px;width:30px;height:15px;background:#eeff88;padding-left:2px;padding-top:2px;overflow:hidden;white-space:nowrap;box-shadow:inset 0 0 0 1px #202020;">14.0</div><div style="position:absolute;left:434px;top:80px;width:30px;height:15px;background:#eeff88;padding-left:2px;padding-top:2px;overflow:hidden;white-space:nowrap;box-shadow:inset 0 0 0 1px #202020;">14.0</div><div style="position:absolute;left:465px;top:80px;width:30px;height:15px;background:#eeff88;padding-left:2px;padding-top:2px;overflow:hidden;white-space:nowrap">14.0</div><div style="position:absolute;left:496px;top:80px;width:30px;height:15px;background:#eeff88;padding-left:2px;padding-top:2px;overflow:hidden;white-space:nowrap">14.0</div><div style="position:absolute;left:31px;top:96px;width:30px;height:15px;background:#eeff88;padding-left:2px;padding-top:2px;overflow:hidden;white-space:nowrap">14.0</div><div style="position:absolute;left:62px;top:96px;width:30px;height:15px;background:#fff08c;padding-left:2px;padding-top:2px;overflow:hidden;white-space:nowrap">14.3</div><div style="position:absolute;left:93px;top:96px;width:30px;height:15px;background:#fff08c;padding-left:2px;padding-top:2px;overflow:hidden;white-space:nowrap">14.3</div><div style="position:absolute;left:124px;top:96px;width:30px;height:15px;background:#dcff94;padding-left:2px;padding-top:2px;overflow:hidden;white-space:nowrap">13.8</div><div style="position:absolute;left:155px;top:96px;width:30px;height:15px;background:#dcff94;padding-left:2px;padding-top:2px;overflow:hidden;white-space:nowrap">13.8</div><div style="position:absolute;left:186px;top:96px;width:30px;height:15px;background:#b4ffb4;padding-left:2px;padding-top:2px;overflow:hidden;white-space:nowrap">13.3</div><div style="position:absolute;left:217px;top:96px;width:30px;height:15px;background:#b4ffb4;padding-left:2px;padding-top:2px;overflow:hidden;white-space:nowrap">13.3</div><div style="position:absolute;left:248px;top:96px;width:30px;height:15px;background:#b4ffb4;padding-left:2px;padding-top:2px;overflow:hidden;white-space:nowrap">13.3</div><div style="position:absolute;left:279px;top:96px;width:30px;height:15px;background:#b4ffb4;padding-left:2px;padding-top:2px;overflow:hidden;white-space:nowrap">13.3</div><div style="position:absolute;left:310px;top:96px;width:30px;height:15px;background:#b4ffb4;padding-left:2px;padding-top:2px;overflow:hidden;white-space:nowrap;box-shadow:inset 0 0 0 1px #202020;">13.3</div><div style="position:absolute;left:341px;top:96px;width:30px;height:15px;background:#b4ffb4;padding-left:2px;padding-top:2px;overflow:hidden;white-space:nowrap;box-shadow:inset 0 0 0 1px #202020;">13.3</div><div style="position:absolute;left:372px;top:96px;width:30px;height:15px;background:#b4ffb4;padding-left:2px;padding-top:2px;overflow:hidden;white-space:nowrap;box-shadow:inset 0 0 0 1px #202020;">13.3</div><div style="position:absolute;left:403px;top:96px;width:30px;height:15px;background:#b4ffb4;padding-left:2px;padding-top:2px;overflow:hidden;white-space:nowrap;box-shadow:inset 0 0 0 1px #202020;">13.3</div><div style="position:absolute;left:434px;top:96px;width:30px;height:15px;background:#b4ffb4;padding-left:2px;padding-top:2px;overflow:hidden;white-space:nowrap;box-shadow:inset 0 0 0 1px #202020;">13.3</div><div style="position:absolute;left:465px;top:96px;width:30px;height:15px;background:#b4ffb4;padding-left:2px;padding-top:2px;overflow:hidden;white-space:nowrap">13.3</div><div style="position:absolute;left:496px;top:96px;width:30px;height:15px;background:#b4ffb4;padding-left:2px;padding-top:2px;overflow:hidden;white-space:nowrap">13.3</div><div style="position:absolute;left:31px;top:112px;width:30px;height:15px;background:#eeff88;padding-left:2px;padding-top:2px;overflow:hidden;white-space:nowrap">14.0</div><div style="position:absolute;left:62px;top:112px;width:30px;height:15px;background:#fff08c;padding-left:2px;padding-top:2px;overflow:hidden;white-space:nowrap">14.3</div><div style="position:absolute;left:93px;top:112px;width:30px;height:15px;background:#ffe48c;padding-left:2px;padding-top:2px;overflow:hidden;white-space:nowrap">14.4</div><div style="position:absolute;left:124px;top:112px;width:30px;height:15px;background:#d4ff98;padding-left:2px;padding-top:2px;overflow:hidden;white-space:nowrap">13.7</div><div style="position:absolute;left:155px;top:112px;width:30px;height:15px;background:#c4ffa4;padding-left:2px;padding-top:2px;overflow:hidden;white-space:nowrap">13.5</div><div style="position:absolute;left:186px;top:112px;width:30px;height:15px;background:#8cffd8;padding-left:2px;padding-top:2px;overflow:hidden;white-space:nowrap">12.5</div><div style="position:absolute;left:217px;top:112px;width:30px;height:15px;background:#8cffd8;padding-left:2px;padding-top:2px;overflow:hidden;white-space:nowrap">12.5</div><div style="position:absolute;left:248px;top:112px;width:30px;height:15px;background:#8cffd8;padding-left:2px;padding-top:2px;overflow:hidden;white-space:nowrap">12.5</div><div style="position:absolute;left:279px;top:112px;width:30px;height:15px;background:#8cffd8;padding-left:2px;padding-top:2px;overflow:hidden;white-space:nowrap">12.5</div><div style="position:absolute;left:310px;top:112px;width:30px;height:15px;background:#8cffd8;padding-left:2px;padding-top:2px;overflow:hidden;white-space:nowrap;box-shadow:inset 0 0 0 1px #202020;">12.5</div><div style="position:absolute;left:341px;top:112px;width:30px;height:15px;background:#8cffd8;padding-left:2px;padding-top:2px;overflow:hidden;white-space:nowrap;box-shadow:inset 0 0 0 1px #202020;">12.5</div><div style="position:absolute;left:372px;top:112px;width:30px;height:15px;background:#8cffd8;padding-left:2px;padding-top:2px;overflow:hidden;white-space:nowrap;box-shadow:inset 0 0 0 1px #202020;">12.5</div><div style="position:absolute;left:403px;top:112px;width:30px;height:15px;background:#8cffd8;padding-left:2px;padding-top:2px;overflow:hidden;white-space:nowrap;box-shadow:inset 0 0 0 1px #202020;">12.5</div><div style="position:absolute;left:434px;top:112px;width:30px;height:15px;background:#8cffd8;padding-left:2px;padding-top:2px;overflow:hidden;white-space:nowrap;box-shadow:inset 0 0 0 1px #202020;">12.5</div><div style="position:absolute;left:465px;top:112px;width:30px;height:15px;background:#8cffd8;padding-left:2px;padding-top:2px;overflow:hidden;white-space:nowrap">12.5</div><div style="position:absolute;left:496px;top:112px;width:30px;height:15px;background:#8cffd8;padding-left:2px;padding-top:2px;overflow:hidden;white-space:nowrap">12.5</div><div style="position:absolute;left:31px;top:128px;width:30px;height:15px;background:#eeff88;padding-left:2px;padding-top:2px;overflow:hidden;white-space:nowrap">14.0</div><div style="position:absolute;left:62px;top:128px;width:30px;height:15px;background:#fff08c;padding-left:2px;padding-top:2px;overflow:hidden;white-space:nowrap">14.3</div><div style="position:absolute;left:93px;top:128px;width:30px;height:15px;background:#ffe48c;padding-left:2px;padding-top:2px;overflow:hidden;white-space:nowrap">14.4</div><div style="position:absolute;left:124px;top:128px;width:30px;height:15px;background:#d4ff98;padding-left:2px;padding-top:2px;overflow:hidden;white-space:nowrap">13.7</div><div style="position:absolute;left:155px;top:128px;width:30px;height:15px;background:#c4ffa4;padding-left:2px;padding-top:2px;overflow:hidden;white-space:nowrap">13.5</div><div style="position:absolute;left:186px;top:128px;width:30px;height:15px;background:#8cffd8;padding-left:2px;padding-top:2px;overflow:hidden;white-space:nowrap">12.5</div><div style="position:absolute;left:217px;top:128px;width:30px;height:15px;background:#8cffd8;padding-left:2px;padding-top:2px;overflow:hidden;white-space:nowrap">12.5</div><div style="position:absolute;left:248px;top:128px;width:30px;height:15px;background:#84ffe4;padding-left:2px;padding-top:2px;overflow:hidden;white-space:nowrap">12.3</div><div style="position:absolute;left:279px;top:128px;width:30px;height:15px;background:#84ffe4;padding-left:2px;padding-top:2px;overflow:hidden;white-space:nowrap">12.3</div><div style="position:absolute;left:310px;top:128px;width:30px;height:15px;background:#84ffe4;padding-left:2px;padding-top:2px;overflow:hidden;white-space:nowrap;box-shadow:inset 0 0 0 1px #202020;">12.3</div><div style="position:absolute;left:341px;top:128px;width:30px;height:15px;background:#84ffe4;padding-left:2px;padding-top:2px;overflow:hidden;white-space:nowrap;box-shadow:inset 0 0 0 1px #202020;">12.3</div><div style="position:absolute;left:372px;top:128px;width:30px;height:15px;background:#84ffe4;padding-left:2px;padding-top:2px;overflow:hidden;white-space:nowrap;box-shadow:inset 0 0 0 1px #202020;">12.3</div><div style="position:absolute;left:403px;top:128px;width:30px;height:15px;background:#84ffe4;padding-left:2px;padding-top:2px;overflow:hidden;white-space:nowrap;box-shadow:inset 0 0 0 1px #202020;">12.3</div><div style="position:absolute;left:434px;top:128px;width:30px;height:15px;background:#84ffe4;padding-left:2px;padding-top:2px;overflow:hidden;white-space:nowrap;box-shadow:inset 0 0 0 1px #202020;">12.3</div><div style="position:absolute;left:465px;top:128px;width:30px;height:15px;background:#84ffe4;padding-left:2px;padding-top:2px;overflow:hidden;white-space:nowrap">12.3</div><div style="position:absolute;left:496px;top:128px;width:30px;height:15px;background:#84ffe4;padding-left:2px;padding-top:2px;overflow:hidden;white-space:nowrap">12.3</div><div style="position:absolute;left:31px;top:144px;width:30px;height:15px;background:#eeff88;padding-left:2px;padding-top:2px;overflow:hidden;white-space:nowrap">14.0</div><div style="position:absolute;left:62px;top:144px;width:30px;height:15px;background:#fff08c;padding-left:2px;padding-top:2px;overflow:hidden;white-space:nowrap">14.3</div><div style="position:absolute;left:93px;top:144px;width:30px;height:15px;background:#ffe48c;padding-left:2px;padding-top:2px;overflow:hidden;white-space:nowrap">14.4</div><div style="position:absolute;left:124px;top:144px;width:30px;height:15px;background:#eeff88;padding-left:2px;padding-top:2px;overflow:hidden;white-space:nowrap">14.0</div><div style="position:absolute;left:155px;top:144px;width:30px;height:15px;background:#c4ffa4;padding-left:2px;padding-top:2px;overflow:hidden;white-space:nowrap">13.5</div><div style="position:absolute;left:186px;top:144px;width:30px;height:15px;background:#8cffd8;padding-left:2px;padding-top:2px;overflow:hidden;white-space:nowrap">12.5</div><div style="position:absolute;left:217px;top:144px;width:30px;height:15px;background:#8cffd8;padding-left:2px;padding-top:2px;overflow:hidden;white-space:nowrap">12.5</div><div style="position:absolute;left:248px;top:144px;width:30px;height:15px;background:#98ffff;padding-left:2px;padding-top:2px;overflow:hidden;white-space:nowrap">11.5</div><div style="position:absolute;left:279px;top:144px;width:30px;height:15px;background:#98ffff;padding-left:2px;padding-top:2px;overflow:hidden;white-space:nowrap">11.5</div><div style="position:absolute;left:310px;top:144px;width:30px;height:15px;background:#98ffff;padding-left:2px;padding-top:2px;overflow:hidden;white-space:nowrap;box-shadow:inset 0 0 0 1px #202020;">11.5</div><div style="position:absolute;left:341px;top:144px;width:30px;height:15px;background:#98ffff;padding-left:2px;padding-top:2px;overflow:hidden;white-space:nowrap;box-shadow:inset 0 0 0 1px #202020;">11.5</div><div style="position:absolute;left:372px;top:144px;width:30px;height:15px;background:#98ffff;padding-left:2px;padding-top:2px;overflow:hidden;white-space:nowrap;box-shadow:inset 0 0 0 1px #202020;">11.5</div><div style="position:absolute;left:403px;top:144px;width:30px;height:15px;background:#98ffff;padding-left:2px;padding-top:2px;overflow:hidden;white-space:nowrap;box-shadow:inset 0 0 0 1px #202020;">11.5</div><div style="position:absolute;left:434px;top:144px;width:30px;height:15px;background:#98ffff;padding-left:2px;padding-top:2px;overflow:hidden;white-space:nowrap;box-shadow:inset 0 0 0 1px #202020;">11.5</div><div style="position:absolute;left:465px;top:144px;width:30px;height:15px;background:#98ffff;padding-left:2px;padding-top:2px;overflow:hidden;white-space:nowrap">11.5</div><div style="position:absolute;left:496px;top:144px;width:30px;height:15px;background:#98ffff;padding-left:2px;padding-top:2px;overflow:hidden;white-space:nowrap">11.5</div><div style="position:absolute;left:31px;top:160px;width:30px;height:15px;background:#eeff88;padding-left:2px;padding-top:2px;overflow:hidden;white-space:nowrap">14.0</div><div style="position:absolute;left:62px;top:160px;width:30px;height:15px;background:#fff08c;padding-left:2px;padding-top:2px;overflow:hidden;white-space:nowrap">14.3</div><div style="position:absolute;left:93px;top:160px;width:30px;height:15px;background:#ffe48c;padding-left:2px;padding-top:2px;overflow:hidden;white-space:nowrap">14.4</div><div style="position:absolute;left:124px;top:160px;width:30px;height:15px;background:#eeff88;padding-left:2px;padding-top:2px;overflow:hidden;white-space:nowrap">14.0</div><div style="position:absolute;left:155px;top:160px;width:30px;height:15px;background:#c4ffa4;padding-left:2px;padding-top:2px;overflow:hidden;white-space:nowrap">13.5</div><div style="position:absolute;left:186px;top:160px;width:30px;height:15px;background:#8cffd8;padding-left:2px;padding-top:2px;overflow:hidden;white-space:nowrap">12.5</div><div style="position:absolute;left:217px;top:160px;width:30px;height:15px;background:#8cffd8;padding-left:2px;padding-top:2px;overflow:hidden;white-space:nowrap">12.5</div><div style="position:absolute;left:248px;top:160px;width:30px;height:15px;background:#a8ffff;padding-left:2px;padding-top:2px;overflow:hidden;white-space:nowrap">11.3</div><div style="position:absolute;left:279px;top:160px;width:30px;height:15px;background:#a8ffff;padding-left:2px;padding-top:2px;overflow:hidden;white-space:nowrap">11.3</div><div style="position:absolute;left:310px;top:160px;width:30px;height:15px;background:#a8ffff;padding-left:2px;padding-top:2px;overflow:hidden;white-space:nowrap;box-shadow:inset 0 0 0 1px #202020;">11.3</div><div style="position:absolute;left:341px;top:160px;width:30px;height:15px;background:#a8ffff;padding-left:2px;padding-top:2px;overflow:hidden;white-space:nowrap;box-shadow:inset 0 0 0 1px #202020;">11.3</div><div style="position:absolute;left:372px;top:160px;width:30px;height:15px;background:#a8ffff;padding-left:2px;padding-top:2px;overflow:hidden;white-space:nowrap;box-shadow:inset 0 0 0 1px #202020;">11.3</div><div style="position:absolute;left:403px;top:160px;width:30px;height:15px;background:#a8ffff;padding-left:2px;padding-top:2px;overflow:hidden;white-space:nowrap;box-shadow:inset 0 0 0 1px #202020;">11.3</div><div style="position:absolute;left:434px;top:160px;width:30px;height:15px;background:#a8ffff;padding-left:2px;padding-top:2px;overflow:hidden;white-space:nowrap;box-shadow:inset 0 0 0 1px #202020;">11.3</div><div style="position:absolute;left:465px;top:160px;width:30px;height:15px;background:#a8ffff;padding-left:2px;padding-top:2px;overflow:hidden;white-space:nowrap">11.3</div><div style="position:absolute;left:496px;top:160px;width:30px;height:15px;background:#a8ffff;padding-left:2px;padding-top:2px;overflow:hidden;white-space:nowrap">11.3</div><div style="position:absolute;left:31px;top:176px;width:30px;height:15px;background:#eeff88;padding-left:2px;padding-top:2px;overflow:hidden;white-space:nowrap">14.0</div><div style="position:absolute;left:62px;top:176px;width:30px;height:15px;background:#fff08c;padding-left:2px;padding-top:2px;overflow:hidden;white-space:nowrap">14.3</div><div style="position:absolute;left:93px;top:176px;width:30px;height:15px;background:#ffe48c;padding-left:2px;padding-top:2px;overflow:hidden;white-space:nowrap">14.4</div><div style="position:absolute;left:124px;top:176px;width:30px;height:15px;background:#eeff88;padding-left:2px;padding-top:2px;overflow:hidden;white-space:nowrap">14.0</div><div style="position:absolute;left:155px;top:176px;width:30px;height:15px;background:#c4ffa4;padding-left:2px;padding-top:2px;overflow:hidden;white-space:nowrap">13.5</div><div style="position:absolute;left:186px;top:176px;width:30px;height:15px;background:#84ffe4;padding-left:2px;padding-top:2px;overflow:hidden;white-space:nowrap">12.3</div><div style="position:absolute;left:217px;top:176px;width:30px;height:15px;background:#98ffff;padding-left:2px;padding-top:2px;overflow:hidden;white-space:nowrap">11.5</div><div style="position:absolute;left:248px;top:176px;width:30px;height:15px;background:#b4fcff;padding-left:2px;padding-top:2px;overflow:hidden;white-space:nowrap">11.1</div><div style="position:absolute;left:279px;top:176px;width:30px;height:15px;background:#b4fcff;padding-left:2px;padding-top:2px;overflow:hidden;white-space:nowrap">11.1</div><div style="position:absolute;left:310px;top:176px;width:30px;height:15px;background:#b4fcff;padding-left:2px;padding-top:2px;overflow:hidden;white-space:nowrap;box-shadow:inset 0 0 0 1px #202020;">11.1</div><div style="position:absolute;left:341px;top:176px;width:30px;height:15px;background:#b4fcff;padding-left:2px;padding-top:2px;overflow:hidden;white-space:nowrap;box-shadow:inset 0 0 0 1px #202020;">11.1</div><div style="position:absolute;left:372px;top:176px;width:30px;height:15px;background:#b4fcff;padding-left:2px;padding-top:2px;overflow:hidden;white-space:nowrap;box-shadow:inset 0 0 0 1px #202020;">11.1</div><div style="position:absolute;left:403px;top:176px;width:30px;height:15px;background:#b4fcff;padding-left:2px;padding-top:2px;overflow:hidden;white-space:nowrap;box-shadow:inset 0 0 0 1px #202020;">11.1</div><div style="position:absolute;left:434px;top:176px;width:30px;height:15px;background:#b4fcff;padding-left:2px;padding-top:2px;overflow:hidden;white-space:nowrap;box-shadow:inset 0 0 0 1px #202020;">11.1</div><div style="position:absolute;left:465px;top:176px;width:30px;height:15px;background:#b4fcff;padding-left:2px;padding-top:2px;overflow:hidden;white-space:nowrap">11.1</div><div style="position:absolute;left:496px;top:176px;width:30px;height:15px;background:#b4fcff;padding-left:2px;padding-top:2px;overflow:hidden;white-space:nowrap">11.1</div><div style="position:absolute;left:31px;top:192px;width:30px;height:15px;background:#eeff88;padding-left:2px;padding-top:2px;overflow:hidden;white-space:nowrap">14.0</div><div style="position:absolute;left:62px;top:192px;width:30px;height:15px;background:#fff08c;padding-left:2px;padding-top:2px;overflow:hidden;white-space:nowrap">14.3</div><div style="position:absolute;left:93px;top:192px;width:30px;height:15px;background:#ffe48c;padding-left:2px;padding-top:2px;overflow:hidden;white-space:nowrap">14.4</div><div style="position:absolute;left:124px;top:192px;width:30px;height:15px;background:#ffe48c;padding-left:2px;padding-top:2px;overflow:hidden;white-space:nowrap">14.4</div><div style="position:absolute;left:155px;top:192px;width:30px;height:15px;background:#ffe48c;padding-left:2px;padding-top:2px;overflow:hidden;white-space:nowrap">14.4</div><div style="position:absolute;left:186px;top:192px;width:30px;height:15px;background:#80ffff;padding-left:2px;padding-top:2px;overflow:hidden;white-space:nowrap">11.8</div><div style="position:absolute;left:217px;top:192px;width:30px;height:15px;background:#acf8ff;padding-left:2px;padding-top:2px;overflow:hidden;white-space:nowrap">11.2</div><div style="position:absolute;left:248px;top:192px;width:30px;height:15px;background:#c0f0ff;padding-left:2px;padding-top:2px;overflow:hidden;white-space:nowrap">10.9</div><div style="position:absolute;left:279px;top:192px;width:30px;height:15px;background:#c0f0ff;padding-left:2px;padding-top:2px;overflow:hidden;white-space:nowrap">10.9</div><div style="position:absolute;left:310px;top:192px;width:30px;height:15px;background:#c0f0ff;padding-left:2px;padding-top:2px;overflow:hidden;white-space:nowrap;box-shadow:inset 0 0 0 1px #202020;">10.9</div><div style="position:absolute;left:341px;top:192px;width:30px;height:15px;background:#c0f0ff;padding-left:2px;padding-top:2px;overflow:hidden;white-space:nowrap;box-shadow:inset 0 0 0 1px #202020;">10.9</div><div style="position:absolute;left:372px;top:192px;width:30px;height:15px;background:#c0f0ff;padding-left:2px;padding-top:2px;overflow:hidden;white-space:nowrap;box-shadow:inset 0 0 0 1px #202020;">10.9</div><div style="position:absolute;left:403px;top:192px;width:30px;height:15px;background:#c0f0ff;padding-left:2px;padding-top:2px;overflow:hidden;white-space:nowrap;box-shadow:inset 0 0 0 1px #202020;">10.9</div><div style="position:absolute;left:434px;top:192px;width:30px;height:15px;background:#c0f0ff;padding-left:2px;padding-top:2px;overflow:hidden;white-space:nowrap;box-shadow:inset 0 0 0 1px #202020;">10.9</div><div style="position:absolute;left:465px;top:192px;width:30px;height:15px;background:#c0f0ff;padding-left:2px;padding-top:2px;overflow:hidden;white-space:nowrap">10.9</div><div style="position:absolute;left:496px;top:192px;width:30px;height:15px;background:#c0f0ff;padding-left:2px;padding-top:2px;overflow:hidden;white-space:nowrap">10.9</div><div style="position:absolute;left:31px;top:208px;width:30px;height:15px;background:#eeff88;padding-left:2px;padding-top:2px;overflow:hidden;white-space:nowrap">14.0</div><div style="position:absolute;left:62px;top:208px;width:30px;height:15px;background:#fff08c;padding-left:2px;padding-top:2px;overflow:hidden;white-space:nowrap">14.3</div><div style="position:absolute;left:93px;top:208px;width:30px;height:15px;background:#ffe48c;padding-left:2px;padding-top:2px;overflow:hidden;white-space:nowrap">14.4</div><div style="position:absolute;left:124px;top:208px;width:30px;height:15px;background:#ffe48c;padding-left:2px;padding-top:2px;overflow:hidden;white-space:nowrap">14.4</div><div style="position:absolute;left:155px;top:208px;width:30px;height:15px;background:#ffe48c;padding-left:2px;padding-top:2px;overflow:hidden;white-space:nowrap">14.4</div><div style="position:absolute;left:186px;top:208px;width:30px;height:15px;background:#a0fcff;padding-left:2px;padding-top:2px;overflow:hidden;white-space:nowrap">11.4</div><div style="position:absolute;left:217px;top:208px;width:30px;height:15px;background:#c0f0ff;padding-left:2px;padding-top:2px;overflow:hidden;white-space:nowrap">10.9</div><div style="position:absolute;left:248px;top:208px;width:30px;height:15px;background:#c8e0ff;padding-left:2px;padding-top:2px;overflow:hidden;white-space:nowrap">10.6</div><div style="position:absolute;left:279px;top:208px;width:30px;height:15px;background:#c8e0ff;padding-left:2px;padding-top:2px;overflow:hidden;white-space:nowrap">10.6</div><div style="position:absolute;left:310px;top:208px;width:30px;height:15px;background:#c8e0ff;padding-left:2px;padding-top:2px;overflow:hidden;white-space:nowrap;box-shadow:inset 0 0 0 1px #202020;">10.6</div><div style="position:absolute;left:341px;top:208px;width:30px;height:15px;background:#c8e0ff;padding-left:2px;padding-top:2px;overflow:hidden;white-space:nowrap;box-shadow:inset 0 0 0 1px #202020;">10.6</div><div style="position:absolute;left:372px;top:208px;width:30px;height:15px;background:#c8e0ff;padding-left:2px;padding-top:2px;overflow:hidden;white-space:nowrap;box-shadow:inset 0 0 0 1px #202020;">10.6</div><div style="position:absolute;left:403px;top:208px;width:30px;height:15px;background:#c8e0ff;padding-left:2px;padding-top:2px;overflow:hidden;white-space:nowrap;box-shadow:inset 0 0 0 1px #202020;">10.6</div><div style="position:absolute;left:434px;top:208px;width:30px;height:15px;background:#c8e0ff;padding-left:2px;padding-top:2px;overflow:hidden;white-space:nowrap;box-shadow:inset 0 0 0 1px #202020;">10.6</div><div style="position:absolute;left:465px;top:208px;width:30px;height:15px;background:#c8e0ff;padding-left:2px;padding-top:2px;overflow:hidden;white-space:nowrap">10.6</div><div style="position:absolute;left:496px;top:208px;width:30px;height:15px;background:#c8e0ff;padding-left:2px;padding-top:2px;overflow:hidden;white-space:nowrap">10.6</div><div style="position:absolute;left:31px;top:224px;width:30px;height:15px;background:#eeff88;padding-left:2px;padding-top:2px;overflow:hidden;white-space:nowrap">14.0</div><div style="position:absolute;left:62px;top:224px;width:30px;height:15px;background:#fff08c;padding-left:2px;padding-top:2px;overflow:hidden;white-space:nowrap">14.3</div><div style="position:absolute;left:93px;top:224px;width:30px;height:15px;background:#ffe48c;padding-left:2px;padding-top:2px;overflow:hidden;white-space:nowrap">14.4</div><div style="position:absolute;left:124px;top:224px;width:30px;height:15px;background:#ffe48c;padding-left:2px;padding-top:2px;overflow:hidden;white-space:nowrap">14.4</div><div style="position:absolute;left:155px;top:224px;width:30px;height:15px;background:#ffe48c;padding-left:2px;padding-top:2px;overflow:hidden;white-space:nowrap">14.4</div><div style="position:absolute;left:186px;top:224px;width:30px;height:15px;background:#c0f0ff;padding-left:2px;padding-top:2px;overflow:hidden;white-space:nowrap">10.9</div><div style="position:absolute;left:217px;top:224px;width:30px;height:15px;background:#c8e0ff;padding-left:2px;padding-top:2px;overflow:hidden;white-space:nowrap">10.6</div><div style="position:absolute;left:248px;top:224px;width:30px;height:15px;background:#ccd6fd;padding-left:2px;padding-top:2px;overflow:hidden;white-space:nowrap">10.5</div><div style="position:absolute;left:279px;top:224px;width:30px;height:15px;background:#ccd6fd;padding-left:2px;padding-top:2px;overflow:hidden;white-space:nowrap">10.5</div><div style="position:absolute;left:310px;top:224px;width:30px;height:15px;background:#ccd6fd;padding-left:2px;padding-top:2px;overflow:hidden;white-space:nowrap;box-shadow:inset 0 0 0 1px #202020;">10.5</div><div style="position:absolute;left:341px;top:224px;width:30px;height:15px;background:#ccd6fd;padding-left:2px;padding-top:2px;overflow:hidden;white-space:nowrap;box-shadow:inset 0 0 0 1px #202020;">10.5</div><div style="position:absolute;left:372px;top:224px;width:30px;height:15px;background:#ccd6fd;padding-left:2px;padding-top:2px;overflow:hidden;white-space:nowrap;box-shadow:inset 0 0 0 1px #202020;">10.5</div><div style="position:absolute;left:403px;top:224px;width:30px;height:15px;background:#ccd6fd;padding-left:2px;padding-top:2px;overflow:hidden;white-space:nowrap;box-shadow:inset 0 0 0 1px #202020;">10.5</div><div style="position:absolute;left:434px;top:224px;width:30px;height:15px;background:#ccd6fd;padding-left:2px;padding-top:2px;overflow:hidden;white-space:nowrap;outline:1px dotted #000;outline-offset:-1px;">10.5</div><div style="position:absolute;left:465px;top:224px;width:30px;height:15px;background:#ccd6fd;padding-left:2px;padding-top:2px;overflow:hidden;white-space:nowrap">10.5</div><div style="position:absolute;left:496px;top:224px;width:30px;height:15px;background:#ccd6fd;padding-left:2px;padding-top:2px;overflow:hidden;white-space:nowrap">10.5</div><div style="position:absolute;left:31px;top:240px;width:30px;height:15px;background:#eeff88;padding-left:2px;padding-top:2px;overflow:hidden;white-space:nowrap">14.0</div><div style="position:absolute;left:62px;top:240px;width:30px;height:15px;background:#fff08c;padding-left:2px;padding-top:2px;overflow:hidden;white-space:nowrap">14.3</div><div style="position:absolute;left:93px;top:240px;width:30px;height:15px;background:#ffe48c;padding-left:2px;padding-top:2px;overflow:hidden;white-space:nowrap">14.4</div><div style="position:absolute;left:124px;top:240px;width:30px;height:15px;background:#ffe48c;padding-left:2px;padding-top:2px;overflow:hidden;white-space:nowrap">14.4</div><div style="position:absolute;left:155px;top:240px;width:30px;height:15px;background:#ffe48c;padding-left:2px;padding-top:2px;overflow:hidden;white-space:nowrap">14.4</div><div style="position:absolute;left:186px;top:240px;width:30px;height:15px;background:#c8e0ff;padding-left:2px;padding-top:2px;overflow:hidden;white-space:nowrap">10.6</div><div style="position:absolute;left:217px;top:240px;width:30px;height:15px;background:#d8cefa;padding-left:2px;padding-top:2px;overflow:hidden;white-space:nowrap">10.3</div><div style="position:absolute;left:248px;top:240px;width:30px;height:15px;background:#d4cefc;padding-left:2px;padding-top:2px;overflow:hidden;white-space:nowrap">10.4</div><div style="position:absolute;left:279px;top:240px;width:30px;height:15px;background:#d4cefc;padding-left:2px;padding-top:2px;overflow:hidden;white-space:nowrap">10.4</div><div style="position:absolute;left:310px;top:240px;width:30px;height:15px;background:#d4cefc;padding-left:2px;padding-top:2px;overflow:hidden;white-space:nowrap">10.4</div><div style="position:absolute;left:341px;top:240px;width:30px;height:15px;background:#d4cefc;padding-left:2px;padding-top:2px;overflow:hidden;white-space:nowrap">10.4</div><div style="position:absolute;left:372px;top:240px;width:30px;height:15px;background:#d4cefc;padding-left:2px;padding-top:2px;overflow:hidden;white-space:nowrap">10.4</div><div style="position:absolute;left:403px;top:240px;width:30px;height:15px;background:#d4cefc;padding-left:2px;padding-top:2px;overflow:hidden;white-space:nowrap">10.4</div><div style="position:absolute;left:434px;top:240px;width:30px;height:15px;background:#d4cefc;padding-left:2px;padding-top:2px;overflow:hidden;white-space:nowrap">10.4</div><div style="position:absolute;left:465px;top:240px;width:30px;height:15px;background:#d4cefc;padding-left:2px;padding-top:2px;overflow:hidden;white-space:nowrap">10.4</div><div style="position:absolute;left:496px;top:240px;width:30px;height:15px;background:#d4cefc;padding-left:2px;padding-top:2px;overflow:hidden;white-space:nowrap">10.4</div><div style="position:absolute;left:31px;top:256px;width:30px;height:15px;background:#eeff88;padding-left:2px;padding-top:2px;overflow:hidden;white-space:nowrap">14.0</div><div style="position:absolute;left:62px;top:256px;width:30px;height:15px;background:#fff08c;padding-left:2px;padding-top:2px;overflow:hidden;white-space:nowrap">14.3</div><div style="position:absolute;left:93px;top:256px;width:30px;height:15px;background:#ffe48c;padding-left:2px;padding-top:2px;overflow:hidden;white-space:nowrap">14.4</div><div style="position:absolute;left:124px;top:256px;width:30px;height:15px;background:#ffe48c;padding-left:2px;padding-top:2px;overflow:hidden;white-space:nowrap">14.4</div><div style="position:absolute;left:155px;top:256px;width:30px;height:15px;background:#ffe48c;padding-left:2px;padding-top:2px;overflow:hidden;white-space:nowrap">14.4</div><div style="position:absolute;left:186px;top:256px;width:30px;height:15px;background:#e0c8f8;padding-left:2px;padding-top:2px;overflow:hidden;white-space:nowrap">10.2</div><div style="position:absolute;left:217px;top:256px;width:30px;height:15px;background:#e0c8f8;padding-left:2px;padding-top:2px;overflow:hidden;white-space:nowrap">10.2</div><div style="position:absolute;left:248px;top:256px;width:30px;height:15px;background:#e0c8f8;padding-left:2px;padding-top:2px;overflow:hidden;white-space:nowrap">10.2</div><div style="position:absolute;left:279px;top:256px;width:30px;height:15px;background:#e0c8f8;padding-left:2px;padding-top:2px;overflow:hidden;white-space:nowrap">10.2</div><div style="position:absolute;left:310px;top:256px;width:30px;height:15px;background:#e0c8f8;padding-left:2px;padding-top:2px;overflow:hidden;white-space:nowrap">10.2</div><div style="position:absolute;left:341px;top:256px;width:30px;height:15px;background:#e0c8f8;padding-left:2px;padding-top:2px;overflow:hidden;white-space:nowrap">10.2</div><div style="position:absolute;left:372px;top:256px;width:30px;height:15px;background:#e0c8f8;padding-left:2px;padding-top:2px;overflow:hidden;white-space:nowrap">10.2</div><div style="position:absolute;left:403px;top:256px;width:30px;height:15px;background:#e0c8f8;padding-left:2px;padding-top:2px;overflow:hidden;white-space:nowrap">10.2</div><div style="position:absolute;left:434px;top:256px;width:30px;height:15px;background:#e0c8f8;padding-left:2px;padding-top:2px;overflow:hidden;white-space:nowrap">10.2</div><div style="position:absolute;left:465px;top:256px;width:30px;height:15px;background:#e0c8f8;padding-left:2px;padding-top:2px;overflow:hidden;white-space:nowrap">10.2</div><div style="position:absolute;left:496px;top:256px;width:30px;height:15px;background:#e0c8f8;padding-left:2px;padding-top:2px;overflow:hidden;white-space:nowrap">10.2</div><div style="position:absolute;left:41px;top:21px;width:8px;height:8px;background:#000"></div><div style="position:absolute;left:42px;top:21px;width:7px;height:7px;background:#f00"></div></div><div class="gb" style="left:592px;top:235px;width:200px;height:43px"></div><div class="abs" style="left:598px;top:228px;width:131px;height:15px;background:#f0f0f0"></div><div class="edit" style="left:601px;top:230px;width:12px;height:12px"><svg width="10" height="10" style="position:absolute;left:0;top:0"><path d="M2,4 L4,6 L8,2 L8,4 L4,8 L2,6Z" fill="#000"/></svg></div><div class="t b" style="left:621px;top:228.5px">Лямбда-контроль</div><div class="t b" style="left:609.5px;top:249.5px;letter-spacing:.12px">Скорость узкопол. ЛЗ</div><div class="gb" style="left:592px;top:292px;width:200px;height:66px"><div class="lg" style="left:5px">PID регулятор ШЛЗ</div></div><div class="t b" style="left:609px;top:310px">kp</div><div class="t b" style="left:665px;top:310px">ki</div><div class="t b" style="left:721px;top:310px">kd</div><div class="edit" style="left:600px;top:326px;width:48px;height:21px"><div class="t b" style="left:3px;top:2px">45</div><div style="position:absolute;right:1px;top:1px;width:15px;height:8px;background:#f0f0f0;border:1px solid;border-color:#fff #696969 #696969 #fff"><div style="position:absolute;left:50%;top:50%;margin:-2px 0 0 -4px;border:4px solid transparent;border-top:0;border-bottom-color:#000"></div></div><div style="position:absolute;right:1px;top:9px;width:15px;height:8px;background:#f0f0f0;border:1px solid;border-color:#fff #696969 #696969 #fff"><div style="position:absolute;left:50%;top:50%;margin:-2px 0 0 -4px;border:4px solid transparent;border-bottom:0;border-top-color:#000"></div></div></div><div class="edit" style="left:656px;top:326px;width:48px;height:21px"><div class="t b" style="left:3px;top:2px">44</div><div style="position:absolute;right:1px;top:1px;width:15px;height:8px;background:#f0f0f0;border:1px solid;border-color:#fff #696969 #696969 #fff"><div style="position:absolute;left:50%;top:50%;margin:-2px 0 0 -4px;border:4px solid transparent;border-top:0;border-bottom-color:#000"></div></div><div style="position:absolute;right:1px;top:9px;width:15px;height:8px;background:#f0f0f0;border:1px solid;border-color:#fff #696969 #696969 #fff"><div style="position:absolute;left:50%;top:50%;margin:-2px 0 0 -4px;border:4px solid transparent;border-bottom:0;border-top-color:#000"></div></div></div><div class="edit" style="left:712px;top:326px;width:48px;height:21px"><div class="t b" style="left:3px;top:2px">20</div><div style="position:absolute;right:1px;top:1px;width:15px;height:8px;background:#f0f0f0;border:1px solid;border-color:#fff #696969 #696969 #fff"><div style="position:absolute;left:50%;top:50%;margin:-2px 0 0 -4px;border:4px solid transparent;border-top:0;border-bottom-color:#000"></div></div><div style="position:absolute;right:1px;top:9px;width:15px;height:8px;background:#f0f0f0;border:1px solid;border-color:#fff #696969 #696969 #fff"><div style="position:absolute;left:50%;top:50%;margin:-2px 0 0 -4px;border:4px solid transparent;border-bottom:0;border-top-color:#000"></div></div></div><div class="gb" style="left:592px;top:372px;width:200px;height:50px"><div class="lg" style="left:5px">Адаптация</div></div><div class="btn" style="left:608px;top:390px;width:97px;height:25px;line-height:23px">Посмотреть</div><div class="btn" style="left:712px;top:390px;width:97px;height:25px;line-height:23px;text-align:left;padding-left:20px">Очистить</div><div class="gb" style="left:592px;top:436px;width:200px;height:66px"><div class="lg" style="left:5px">Ограничение смеси на холодную</div></div><div class="t b" style="left:600.5px;top:461px;letter-spacing:-.25px">Смесь</div><div class="edit" style="left:643px;top:458px;width:48px;height:20px"><div class="t b" style="left:3px;top:2px">14.8</div><div style="position:absolute;right:1px;top:1px;width:13px;height:8px;background:#f0f0f0;border:1px solid;border-color:#fff #696969 #696969 #fff"><div style="position:absolute;left:50%;top:50%;margin:-2px 0 0 -2px;border:2px solid transparent;border-top:0;border-bottom-color:#000"></div></div><div style="position:absolute;right:1px;top:9px;width:13px;height:8px;background:#f0f0f0;border:1px solid;border-color:#fff #696969 #696969 #fff"><div style="position:absolute;left:50%;top:50%;margin:-2px 0 0 -2px;border:2px solid transparent;border-bottom:0;border-top-color:#000"></div></div></div><div class="t b" style="left:698.5px;top:461px">при Т ниже</div><div class="gb" style="left:704px;top:522px;width:100px;height:42px"><div class="lg" style="font-weight:normal;left:6px"><span class="nx">Быстрая</span></div></div><div class="t" style="left:712px;top:538px"><span class="nx">F11</span></div><div class="edit" style="left:736px;top:536px;width:40px;height:19px"><div class="t" style="left:3px;top:1px">0</div></div><div class="t" style="left:728px;top:572px"><span class="nx">Педаль</span></div><div class="abs" style="left:704px;top:588px;width:90px;height:17px;background:#2a2a2a"></div><div class="t" style="left:734.5px;top:620px"><span class="nx">Уровень</span></div><div class="abs" style="left:704px;top:636px;width:90px;height:17px;background:#2a2a2a"></div><div class="sunk" style="left:52px;top:669px;width:126px;height:23px"></div><div class="sunk" style="left:184px;top:669px;width:40px;height:23px"></div><div class="sunk" style="left:230px;top:669px;width:59px;height:23px"></div><div class="sunk" style="left:296px;top:669px;width:240px;height:23px"></div><div class="sunk" style="left:540px;top:669px;width:260px;height:23px"></div><div class="t b" style="left:58.5px;top:673px">Режим:</div><div class="t" style="left:189px;top:673px"><span class="nx">Фаза</span></div><div class="t b" style="left:302.5px;top:673px">Ошибки:</div><div class="t" style="left:361px;top:673px"><span class="nx">ДАД</span></div><div class="t" style="left:391px;top:673px"><span class="nx">ДПКВ</span></div><div class="t" style="left:427px;top:673px"><span class="nx">ДНО</span></div><div class="t" style="left:457px;top:673px"><span class="nx">ДФ</span></div><div class="t" style="left:481.5px;top:673px"><span class="nx">ЭДЗ</span></div><div class="t" style="left:514px;top:673px"><span class="nx">ДТ</span></div><div class="t b" style="left:546px;top:673px">Отсечка:</div><div class="t" style="left:604px;top:673px"><span class="nx">ПХХ</span></div><div class="t" style="left:630px;top:673px"><span class="nx">Смесь</span></div><div class="t" style="left:669px;top:673px"><span class="nx">Давл.</span></div><div class="t" style="left:703px;top:673px"><span class="nx">Обороты</span></div><svg width="0" height="0" class="abs"><defs><radialGradient id="hubg" cx=".4" cy=".22" r=".85"><stop offset="0" stop-color="#909090"/><stop offset=".45" stop-color="#6a6a6a"/><stop offset="1" stop-color="#303030"/></radialGradient></defs></svg><svg class="abs" style="left:54.9px;top:509.7px" width="156" height="156" viewBox="54.9 509.7 156 156" font-family="Liberation Sans" ><circle cx="132.9" cy="587.7" r="76.5" fill="#000"/><path d="M81.14,639.46 A73.2,73.2 0 1 1 184.66,639.46" stroke="#dcdcdc" stroke-width="3.6" fill="none"/><path d="M89.55,631.05L83.97,636.63M73.69,603.57L66.06,605.61M73.69,571.83L66.06,569.79M89.55,544.35L83.97,538.77M117.03,528.49L114.99,520.86M148.77,528.49L150.81,520.86M176.25,544.35L181.83,538.77M192.11,571.83L199.74,569.79M192.11,603.57L199.74,605.61M176.25,631.05L181.83,636.63" stroke="#e8e8e8" stroke-width="3"/><path d="M82.15,628.79L79.12,631.25M78.13,623.26L74.86,625.39M74.72,617.35L71.24,619.12M71.94,611.10L68.30,612.50M68.40,597.92L64.55,598.53M67.69,591.12L63.79,591.32M67.69,584.28L63.79,584.08M68.40,577.48L64.55,576.87M71.94,564.30L68.30,562.90M74.72,558.05L71.24,556.28M78.13,552.14L74.86,550.01M82.15,546.61L79.12,544.15M91.81,536.95L89.35,533.92M97.34,532.93L95.21,529.66M103.25,529.52L101.48,526.04M109.50,526.74L108.10,523.10M122.68,523.20L122.07,519.35M129.48,522.49L129.28,518.59M136.32,522.49L136.52,518.59M143.12,523.20L143.73,519.35M156.30,526.74L157.70,523.10M162.55,529.52L164.32,526.04M168.46,532.93L170.59,529.66M173.99,536.95L176.45,533.92M183.65,546.61L186.68,544.15M187.67,552.14L190.94,550.01M191.08,558.05L194.56,556.28M193.86,564.30L197.50,562.90M197.40,577.48L201.25,576.87M198.11,584.28L202.01,584.08M198.11,591.12L202.01,591.32M197.40,597.92L201.25,598.53M193.86,611.10L197.50,612.50M191.08,617.35L194.56,619.12M187.67,623.26L190.94,625.39M183.65,628.79L186.68,631.25" stroke="#e0e0e0" stroke-width="1.5"/><text x="95.2" y="627.7" font-size="12" fill="#d8d8d8" text-anchor="middle">0</text><text x="81.6" y="604.2" font-size="12" fill="#d8d8d8" text-anchor="middle">1</text><text x="81.6" y="577.0" font-size="12" fill="#d8d8d8" text-anchor="middle">2</text><text x="95.2" y="553.5" font-size="12" fill="#d8d8d8" text-anchor="middle">3</text><text x="118.7" y="539.9" font-size="12" fill="#d8d8d8" text-anchor="middle">4</text><text x="145.9" y="539.9" font-size="12" fill="#d8d8d8" text-anchor="middle">5</text><text x="169.4" y="553.5" font-size="12" fill="#d8d8d8" text-anchor="middle">6</text><text x="183.0" y="577.0" font-size="12" fill="#d8d8d8" text-anchor="middle">7</text><text x="183.0" y="604.2" font-size="12" fill="#d8d8d8" text-anchor="middle">8</text><text x="169.4" y="627.7" font-size="12" fill="#d8d8d8" text-anchor="middle">9</text><text x="132.3" y="628.9" font-size="11.6" fill="#d8d8d8" text-anchor="middle">об/мин</text><rect x="106.4" y="635.3" width="53" height="19" fill="#1d1d1d"/><path d="M112.0,638.5L117.2,638.5M118.1,639.5L117.4,643.8M117.0,645.8L116.4,650.1M110.0,651.1L115.2,651.1M109.8,645.8L109.2,650.1M110.9,639.5L110.2,643.8M111.0,644.8L116.2,644.8" stroke="#2b2b2b" stroke-width="1.25" stroke-linecap="round" fill="none"/><path d="M112.0,638.5L117.2,638.5M118.1,639.5L117.4,643.8M117.0,645.8L116.4,650.1M110.0,651.1L115.2,651.1M109.8,645.8L109.2,650.1M110.9,639.5L110.2,643.8" stroke="#f4f4f4" stroke-width="1.25" stroke-linecap="round" fill="none"/><path d="M124.7,638.5L129.9,638.5M130.8,639.5L130.1,643.8M129.7,645.8L129.1,650.1M122.7,651.1L127.9,651.1M122.5,645.8L121.9,650.1M123.6,639.5L122.9,643.8M123.7,644.8L128.9,644.8" stroke="#2b2b2b" stroke-width="1.25" stroke-linecap="round" fill="none"/><path d="M124.7,638.5L129.9,638.5M130.8,639.5L130.1,643.8M129.7,645.8L129.1,650.1M122.7,651.1L127.9,651.1M122.5,645.8L121.9,650.1M123.6,639.5L122.9,643.8" stroke="#f4f4f4" stroke-width="1.25" stroke-linecap="round" fill="none"/><path d="M137.4,638.5L142.6,638.5M143.5,639.5L142.8,643.8M142.4,645.8L141.8,650.1M135.4,651.1L140.6,651.1M135.2,645.8L134.6,650.1M136.3,639.5L135.6,643.8M136.4,644.8L141.6,644.8" stroke="#2b2b2b" stroke-width="1.25" stroke-linecap="round" fill="none"/><path d="M137.4,638.5L142.6,638.5M143.5,639.5L142.8,643.8M142.4,645.8L141.8,650.1M135.4,651.1L140.6,651.1M135.2,645.8L134.6,650.1M136.3,639.5L135.6,643.8" stroke="#f4f4f4" stroke-width="1.25" stroke-linecap="round" fill="none"/><path d="M150.1,638.5L155.3,638.5M156.2,639.5L155.5,643.8M155.1,645.8L154.5,650.1M148.1,651.1L153.3,651.1M147.9,645.8L147.3,650.1M149.0,639.5L148.3,643.8M149.1,644.8L154.3,644.8" stroke="#2b2b2b" stroke-width="1.25" stroke-linecap="round" fill="none"/><path d="M150.1,638.5L155.3,638.5M156.2,639.5L155.5,643.8M155.1,645.8L154.5,650.1M148.1,651.1L153.3,651.1M147.9,645.8L147.3,650.1M149.0,639.5L148.3,643.8" stroke="#f4f4f4" stroke-width="1.25" stroke-linecap="round" fill="none"/><polygon points="89.6,630.1 130.4,585.3 135.4,590.3 90.6,631.1" fill="#f40808"/><polygon points="89.6,630.1 130.4,585.3 132.1,587.0 90.0,630.4" fill="#ff4a4a"/><polygon points="135.8,579.4 146.5,568.6 152.1,574.2 141.3,584.9" fill="#f01414"/><polygon points="135.8,579.4 146.5,568.6 149.1,571.2 138.3,581.9" fill="#ff5c5c"/><circle cx="132.9" cy="587.8000000000001" r="12.4" fill="#222"/><circle cx="132.9" cy="587.8000000000001" r="11.1" fill="url(#hubg)"/></svg><svg class="abs" style="left:215.0px;top:509.7px" width="156" height="156" viewBox="215.0 509.7 156 156" font-family="Liberation Sans" ><circle cx="293.0" cy="587.7" r="76.5" fill="#000"/><path d="M241.24,639.46 A73.2,73.2 0 1 1 344.76,639.46" stroke="#dcdcdc" stroke-width="3.6" fill="none"/><path d="M249.65,631.05L244.07,636.63M231.70,587.70L223.80,587.70M249.65,544.35L244.07,538.77M293.00,526.40L293.00,518.50M336.35,544.35L341.93,538.77M354.30,587.70L362.20,587.70M336.35,631.05L341.93,636.63" stroke="#e8e8e8" stroke-width="3"/><path d="M240.17,626.08L237.02,628.37M234.82,617.35L231.34,619.12M230.90,607.88L227.19,609.08M228.50,597.92L224.65,598.53M228.50,577.48L224.65,576.87M230.90,567.52L227.19,566.32M234.82,558.05L231.34,556.28M240.17,549.32L237.02,547.03M254.62,534.87L252.33,531.72M263.35,529.52L261.58,526.04M272.82,525.60L271.62,521.89M282.78,523.20L282.17,519.35M303.22,523.20L303.83,519.35M313.18,525.60L314.38,521.89M322.65,529.52L324.42,526.04M331.38,534.87L333.67,531.72M345.83,549.32L348.98,547.03M351.18,558.05L354.66,556.28M355.10,567.52L358.81,566.32M357.50,577.48L361.35,576.87M357.50,597.92L361.35,598.53M355.10,607.88L358.81,609.08M351.18,617.35L354.66,619.12M345.83,626.08L348.98,628.37" stroke="#e0e0e0" stroke-width="1.5"/><text x="256.2" y="626.8" font-size="12" fill="#d8d8d8" text-anchor="middle">0</text><text x="241.2" y="590.6" font-size="12" fill="#d8d8d8" text-anchor="middle">20</text><text x="256.2" y="554.4" font-size="12" fill="#d8d8d8" text-anchor="middle">40</text><text x="292.4" y="539.4" font-size="12" fill="#d8d8d8" text-anchor="middle">60</text><text x="328.6" y="554.4" font-size="12" fill="#d8d8d8" text-anchor="middle">80</text><text x="343.6" y="590.6" font-size="12" fill="#d8d8d8" text-anchor="middle">100</text><text x="328.6" y="626.8" font-size="12" fill="#d8d8d8" text-anchor="middle">120</text><text x="290.0" y="628.9" font-size="11.6" fill="#d8d8d8" text-anchor="middle">Форсунки</text><rect x="272.5" y="635.3" width="40" height="19" fill="#1d1d1d"/><path d="M278.1,638.5L283.3,638.5M284.2,639.5L283.5,643.8M283.1,645.8L282.5,650.1M276.1,651.1L281.3,651.1M275.9,645.8L275.3,650.1M277.0,639.5L276.3,643.8M277.1,644.8L282.3,644.8" stroke="#2b2b2b" stroke-width="1.25" stroke-linecap="round" fill="none"/><path d="M290.8,638.5L296.0,638.5M296.9,639.5L296.2,643.8M295.8,645.8L295.2,650.1M288.8,651.1L294.0,651.1M288.6,645.8L288.0,650.1M289.7,639.5L289.0,643.8M289.8,644.8L295.0,644.8" stroke="#2b2b2b" stroke-width="1.25" stroke-linecap="round" fill="none"/><path d="M303.5,638.5L308.7,638.5M309.6,639.5L308.9,643.8M308.5,645.8L307.9,650.1M301.5,651.1L306.7,651.1M301.3,645.8L300.7,650.1M302.4,639.5L301.7,643.8M302.5,644.8L307.7,644.8" stroke="#2b2b2b" stroke-width="1.25" stroke-linecap="round" fill="none"/><path d="M303.5,638.5L308.7,638.5M309.6,639.5L308.9,643.8M308.5,645.8L307.9,650.1M301.5,651.1L306.7,651.1M301.3,645.8L300.7,650.1M302.4,639.5L301.7,643.8" stroke="#f4f4f4" stroke-width="1.25" stroke-linecap="round" fill="none"/><polygon points="249.7,630.1 290.5,585.3 295.5,590.3 250.7,631.1" fill="#f40808"/><polygon points="249.7,630.1 290.5,585.3 292.2,587.0 250.1,630.4" fill="#ff4a4a"/><polygon points="295.9,579.4 306.6,568.6 312.2,574.2 301.4,584.9" fill="#f01414"/><polygon points="295.9,579.4 306.6,568.6 309.2,571.2 298.4,581.9" fill="#ff5c5c"/><circle cx="293.0" cy="587.8000000000001" r="12.4" fill="#222"/><circle cx="293.0" cy="587.8000000000001" r="11.1" fill="url(#hubg)"/></svg><svg class="abs" style="left:374.9px;top:509.7px" width="156" height="156" viewBox="374.9 509.7 156 156" font-family="Liberation Sans" ><circle cx="452.9" cy="587.7" r="76.5" fill="#000"/><path d="M401.14,639.46 A73.2,73.2 0 1 1 504.66,639.46" stroke="#dcdcdc" stroke-width="3.6" fill="none"/><path d="M409.55,631.05L403.97,636.63M392.78,599.66L385.03,601.20M396.27,564.24L388.97,561.22M418.84,536.73L414.45,530.16M452.90,526.40L452.90,518.50M486.96,536.73L491.35,530.16M509.53,564.24L516.83,561.22M513.02,599.66L520.77,601.20M496.25,631.05L501.83,636.63" stroke="#e8e8e8" stroke-width="3"/><path d="M401.62,628.13L398.56,630.54M397.22,621.82L393.90,623.86M393.60,615.04L390.06,616.67M390.80,607.88L387.09,609.08M387.80,592.82L383.91,593.13M387.65,585.14L383.75,584.98M388.40,577.48L384.55,576.87M390.05,569.97L386.30,568.92M395.93,555.79L392.52,553.89M400.07,549.32L396.92,547.03M404.95,543.37L402.08,540.73M410.49,538.05L407.96,535.08M423.25,529.52L421.48,526.04M430.30,526.44L428.95,522.78M437.66,524.20L436.75,520.41M445.22,522.85L444.77,518.98M460.58,522.85L461.03,518.98M468.14,524.20L469.05,520.41M475.50,526.44L476.85,522.78M482.55,529.52L484.32,526.04M495.31,538.05L497.84,535.08M500.85,543.37L503.72,540.73M505.73,549.32L508.88,547.03M509.87,555.79L513.28,553.89M515.75,569.97L519.50,568.92M517.40,577.48L521.25,576.87M518.15,585.14L522.05,584.98M518.00,592.82L521.89,593.13M515.00,607.88L518.71,609.08M512.20,615.04L515.74,616.67M508.58,621.82L511.90,623.86M504.18,628.13L507.24,630.54" stroke="#e0e0e0" stroke-width="1.5"/><text x="417.8" y="625.1" font-size="12" fill="#d8d8d8" text-anchor="middle">0</text><text x="404.4" y="600.1" font-size="12" fill="#d8d8d8" text-anchor="middle">50</text><text x="407.2" y="571.9" font-size="12" fill="#d8d8d8" text-anchor="middle">100</text><text x="425.2" y="550.0" font-size="12" fill="#d8d8d8" text-anchor="middle">150</text><text x="452.3" y="541.8" font-size="12" fill="#d8d8d8" text-anchor="middle">200</text><text x="479.4" y="550.0" font-size="12" fill="#d8d8d8" text-anchor="middle">250</text><text x="497.4" y="571.9" font-size="12" fill="#d8d8d8" text-anchor="middle">300</text><text x="500.2" y="600.1" font-size="12" fill="#d8d8d8" text-anchor="middle">350</text><text x="486.8" y="625.1" font-size="12" fill="#d8d8d8" text-anchor="middle">400</text><text x="452.29999999999995" y="628.9" font-size="11.6" fill="#d8d8d8" text-anchor="middle">кПа</text><rect x="432.4" y="635.3" width="40" height="19" fill="#1d1d1d"/><path d="M438.0,638.5L443.2,638.5M444.1,639.5L443.4,643.8M443.0,645.8L442.4,650.1M436.0,651.1L441.2,651.1M435.8,645.8L435.2,650.1M436.9,639.5L436.2,643.8M437.0,644.8L442.2,644.8" stroke="#2b2b2b" stroke-width="1.25" stroke-linecap="round" fill="none"/><path d="M450.7,638.5L455.9,638.5M456.8,639.5L456.1,643.8M455.7,645.8L455.1,650.1M448.7,651.1L453.9,651.1M448.5,645.8L447.9,650.1M449.6,639.5L448.9,643.8M449.7,644.8L454.9,644.8" stroke="#2b2b2b" stroke-width="1.25" stroke-linecap="round" fill="none"/><path d="M463.4,638.5L468.6,638.5M469.5,639.5L468.8,643.8M468.4,645.8L467.8,650.1M461.4,651.1L466.6,651.1M461.2,645.8L460.6,650.1M462.3,639.5L461.6,643.8M462.4,644.8L467.6,644.8" stroke="#2b2b2b" stroke-width="1.25" stroke-linecap="round" fill="none"/><path d="M463.4,638.5L468.6,638.5M469.5,639.5L468.8,643.8M468.4,645.8L467.8,650.1M461.4,651.1L466.6,651.1M461.2,645.8L460.6,650.1M462.3,639.5L461.6,643.8" stroke="#f4f4f4" stroke-width="1.25" stroke-linecap="round" fill="none"/><polygon points="409.6,630.1 450.4,585.3 455.4,590.3 410.6,631.1" fill="#f40808"/><polygon points="409.6,630.1 450.4,585.3 452.1,587.0 410.0,630.4" fill="#ff4a4a"/><polygon points="455.8,579.4 466.5,568.6 472.1,574.2 461.3,584.9" fill="#f01414"/><polygon points="455.8,579.4 466.5,568.6 469.1,571.2 458.3,581.9" fill="#ff5c5c"/><circle cx="452.9" cy="587.8000000000001" r="12.4" fill="#222"/><circle cx="452.9" cy="587.8000000000001" r="11.1" fill="url(#hubg)"/></svg><svg class="abs" style="left:535.0px;top:509.7px" width="156" height="156" viewBox="535.0 509.7 156 156" font-family="Liberation Sans" ><circle cx="613.0" cy="587.7" r="76.5" fill="#000"/><path d="M561.24,639.46 A73.2,73.2 0 1 1 664.76,639.46" stroke="#dcdcdc" stroke-width="3.6" fill="none"/><path d="M569.65,631.05L564.07,636.63M553.79,603.57L546.16,605.61M553.79,571.83L546.16,569.79M569.65,544.35L564.07,538.77M597.13,528.49L595.09,520.86M628.87,528.49L630.91,520.86M656.35,544.35L661.93,538.77M672.21,571.83L679.84,569.79M672.21,603.57L679.84,605.61M656.35,631.05L661.93,636.63" stroke="#e8e8e8" stroke-width="3"/><path d="M562.25,628.79L559.22,631.25M558.23,623.26L554.96,625.39M554.82,617.35L551.34,619.12M552.04,611.10L548.40,612.50M548.50,597.92L544.65,598.53M547.79,591.12L543.89,591.32M547.79,584.28L543.89,584.08M548.50,577.48L544.65,576.87M552.04,564.30L548.40,562.90M554.82,558.05L551.34,556.28M558.23,552.14L554.96,550.01M562.25,546.61L559.22,544.15M571.91,536.95L569.45,533.92M577.44,532.93L575.31,529.66M583.35,529.52L581.58,526.04M589.60,526.74L588.20,523.10M602.78,523.20L602.17,519.35M609.58,522.49L609.38,518.59M616.42,522.49L616.62,518.59M623.22,523.20L623.83,519.35M636.40,526.74L637.80,523.10M642.65,529.52L644.42,526.04M648.56,532.93L650.69,529.66M654.09,536.95L656.55,533.92M663.75,546.61L666.78,544.15M667.77,552.14L671.04,550.01M671.18,558.05L674.66,556.28M673.96,564.30L677.60,562.90M677.50,577.48L681.35,576.87M678.21,584.28L682.11,584.08M678.21,591.12L682.11,591.32M677.50,597.92L681.35,598.53M673.96,611.10L677.60,612.50M671.18,617.35L674.66,619.12M667.77,623.26L671.04,625.39M663.75,628.79L666.78,631.25" stroke="#e0e0e0" stroke-width="1.5"/><text x="576.1" y="626.9" font-size="12" fill="#d8d8d8" text-anchor="middle">10</text><text x="562.8" y="603.9" font-size="12" fill="#d8d8d8" text-anchor="middle">11</text><text x="562.8" y="577.3" font-size="12" fill="#d8d8d8" text-anchor="middle">12</text><text x="576.1" y="554.3" font-size="12" fill="#d8d8d8" text-anchor="middle">13</text><text x="599.1" y="541.0" font-size="12" fill="#d8d8d8" text-anchor="middle">14</text><text x="625.7" y="541.0" font-size="12" fill="#d8d8d8" text-anchor="middle">15</text><text x="648.7" y="554.3" font-size="12" fill="#d8d8d8" text-anchor="middle">16</text><text x="662.0" y="577.3" font-size="12" fill="#d8d8d8" text-anchor="middle">17</text><text x="662.0" y="603.9" font-size="12" fill="#d8d8d8" text-anchor="middle">18</text><text x="648.7" y="626.9" font-size="12" fill="#d8d8d8" text-anchor="middle">19</text><text x="612.4" y="628.9" font-size="11.6" fill="#d8d8d8" text-anchor="middle">Смесь</text><rect x="592.5" y="635.3" width="40" height="19" fill="#1d1d1d"/><path d="M598.1,638.5L603.3,638.5M604.2,639.5L603.5,643.8M603.1,645.8L602.5,650.1M596.1,651.1L601.3,651.1M595.9,645.8L595.3,650.1M597.0,639.5L596.3,643.8M597.1,644.8L602.3,644.8" stroke="#2b2b2b" stroke-width="1.25" stroke-linecap="round" fill="none"/><path d="M604.2,639.5L603.5,643.8M603.1,645.8L602.5,650.1" stroke="#f4f4f4" stroke-width="1.25" stroke-linecap="round" fill="none"/><path d="M610.8,638.5L616.0,638.5M616.9,639.5L616.2,643.8M615.8,645.8L615.2,650.1M608.8,651.1L614.0,651.1M608.6,645.8L608.0,650.1M609.7,639.5L609.0,643.8M609.8,644.8L615.0,644.8" stroke="#2b2b2b" stroke-width="1.25" stroke-linecap="round" fill="none"/><path d="M610.8,638.5L616.0,638.5M616.9,639.5L616.2,643.8M615.8,645.8L615.2,650.1M608.8,651.1L614.0,651.1M608.6,645.8L608.0,650.1M609.7,639.5L609.0,643.8" stroke="#f4f4f4" stroke-width="1.25" stroke-linecap="round" fill="none"/><circle cx="618.4" cy="650.9" r="1" fill="#f4f4f4"/><path d="M623.5,638.5L628.7,638.5M629.6,639.5L628.9,643.8M628.5,645.8L627.9,650.1M621.5,651.1L626.7,651.1M621.3,645.8L620.7,650.1M622.4,639.5L621.7,643.8M622.5,644.8L627.7,644.8" stroke="#2b2b2b" stroke-width="1.25" stroke-linecap="round" fill="none"/><path d="M623.5,638.5L628.7,638.5M629.6,639.5L628.9,643.8M628.5,645.8L627.9,650.1M621.5,651.1L626.7,651.1M621.3,645.8L620.7,650.1M622.4,639.5L621.7,643.8" stroke="#f4f4f4" stroke-width="1.25" stroke-linecap="round" fill="none"/><polygon points="569.7,630.1 610.5,585.3 615.5,590.3 570.7,631.1" fill="#f40808"/><polygon points="569.7,630.1 610.5,585.3 612.2,587.0 570.1,630.4" fill="#ff4a4a"/><polygon points="615.9,579.4 626.6,568.6 632.2,574.2 621.4,584.9" fill="#f01414"/><polygon points="615.9,579.4 626.6,568.6 629.2,571.2 618.4,581.9" fill="#ff5c5c"/><circle cx="613.0" cy="587.8000000000001" r="12.4" fill="#222"/><circle cx="613.0" cy="587.8000000000001" r="11.1" fill="url(#hubg)"/></svg>
<div class="abs" style="left:749px;top:129px;width:657px;height:577px;border-radius:2px 2px 2px 2px;border:1px solid #101820;box-shadow:0 0 0 1px rgba(0,0,0,.2),-1px 3px 10px 3px rgba(0,0,0,.62);background:radial-gradient(ellipse 60px 14px at 16px 13px,rgba(196,212,234,.9) 0,rgba(170,190,220,0) 100%),linear-gradient(90deg,#94acd0 0,#7c9ac4 70px,#6c8cb8 160px,#7190bb 200px,#829ec4 250px,#8aa4c8 300px,#6f8dba 318px,#4a72aa 326px,#32609c 420px,#2f5c98 500px,#4e78ae 550px,#7f9dc6 590px,#93add0 617px);overflow:hidden"><div class="abs" style="left:0;top:0;right:0;bottom:0;border-radius:1px;border:1px solid rgba(255,255,255,.95)"></div><div class="abs" style="left:1px;top:24px;right:0;bottom:1px;background:linear-gradient(180deg,rgba(150,190,235,.0) 0,rgba(120,175,235,.35) 100%)"></div><div class="abs" style="left:1px;height:5px;right:0;bottom:1px;background:linear-gradient(90deg,#6c9ad2 0,#4c84c8 40px,#4a80c4 100%)"></div><div class="t" style="left:8px;top:5px;font-size:12px;text-shadow:0 0 6px #fff,0 0 8px #fff">3D</div></div><div class="abs" style="left:754px;top:152px;width:657px;height:549px;border:1px solid rgba(220,235,250,.7)"><div class="abs" style="left:0;top:0;right:0;bottom:0;border:1px solid #000"></div><div class="abs" style="left:1px;top:1px;right:1px;bottom:1px;border:1px solid #fff;background:#000"></div></div><svg class="abs" style="left:757px;top:155px" width="609" height="543" viewBox="757 155 609 543" shape-rendering="crispEdges" stroke-linejoin="round"><rect x="757" y="155" width="609" height="543" fill="#000"/><g stroke="#00788c" stroke-width="1"><line x1="775.1" y1="547.6" x2="1015.6" y2="518.7" stroke="#bdbdbd" stroke-width="1"/><line x1="1015.6" y1="518.7" x2="1372.8" y2="600.8" stroke="#e6e6e6" stroke-width="1"/><line x1="775.9" y1="252.4" x2="1016.1" y2="223.7" stroke="#6e6e6e" stroke-width="1"/><line x1="1016.1" y1="223.7" x2="1373.1" y2="304.6" stroke="#5e5e5e" stroke-width="1"/><line x1="775.1" y1="547.6" x2="775.9" y2="252.4" stroke="#6e6e6e" stroke-width="1"/><line x1="775.1" y1="547.6" x2="1131.6" y2="630.0" stroke="#8c8c8c" stroke-width="1"/><polygon points="1016.1,223.7 1039.8,229.1 1023.8,231.0 1000.1,225.6" fill="#ffff00"/><polygon points="1039.8,229.1 1063.6,234.4 1047.6,236.4 1023.8,231.0" fill="#ffff00"/><polygon points="1063.6,234.4 1087.3,239.8 1071.3,241.7 1047.6,236.4" fill="#ffff00"/><polygon points="1087.3,239.8 1111.0,258.3 1095.0,260.2 1071.3,241.7" fill="#ffff00"/><polygon points="1111.0,258.3 1134.8,263.7 1118.7,265.6 1095.0,260.2" fill="#f4ff00"/><polygon points="1134.8,263.7 1158.5,269.1 1142.5,271.0 1118.7,265.6" fill="#f4ff00"/><polygon points="1158.5,269.1 1182.3,274.5 1166.3,276.4 1142.5,271.0" fill="#f4ff00"/><polygon points="1182.3,274.5 1206.1,266.7 1190.1,268.7 1166.3,276.4" fill="#f4ff00"/><polygon points="1206.1,266.7 1229.9,272.1 1213.9,274.1 1190.1,268.7" fill="#ffff00"/><polygon points="1229.9,272.1 1253.8,277.5 1237.7,279.5 1213.9,274.1" fill="#ffff00"/><polygon points="1253.8,277.5 1277.6,282.9 1261.6,284.9 1237.7,279.5" fill="#ffff00"/><polygon points="1277.6,282.9 1301.5,288.3 1285.4,290.3 1261.6,284.9" fill="#ffff00"/><polygon points="1301.5,288.3 1325.3,293.7 1309.3,295.7 1285.4,290.3" fill="#ffff00"/><polygon points="1325.3,293.7 1349.2,299.2 1333.1,301.1 1309.3,295.7" fill="#ffff00"/><polygon points="1349.2,299.2 1373.1,304.6 1357.0,306.5 1333.1,301.1" fill="#ffff00"/><polygon points="1000.1,225.6 1023.8,231.0 1007.8,232.9 984.1,227.5" fill="#ffff00"/><polygon points="1023.8,231.0 1047.6,236.4 1031.5,238.3 1007.8,232.9" fill="#ffff00"/><polygon points="1047.6,236.4 1071.3,241.7 1055.3,243.6 1031.5,238.3" fill="#ffff00"/><polygon points="1071.3,241.7 1095.0,260.2 1079.0,262.1 1055.3,243.6" fill="#ffff00"/><polygon points="1095.0,260.2 1118.7,265.6 1102.7,267.5 1079.0,262.1" fill="#f4ff00"/><polygon points="1118.7,265.6 1142.5,271.0 1126.5,272.9 1102.7,267.5" fill="#f4ff00"/><polygon points="1142.5,271.0 1166.3,276.4 1150.3,278.3 1126.5,272.9" fill="#f4ff00"/><polygon points="1166.3,276.4 1190.1,268.7 1174.1,270.6 1150.3,278.3" fill="#f4ff00"/><polygon points="1190.1,268.7 1213.9,274.1 1197.9,276.0 1174.1,270.6" fill="#ffff00"/><polygon points="1213.9,274.1 1237.7,279.5 1221.7,281.4 1197.9,276.0" fill="#ffff00"/><polygon points="1237.7,279.5 1261.6,284.9 1245.5,286.8 1221.7,281.4" fill="#ffff00"/><polygon points="1261.6,284.9 1285.4,290.3 1269.4,292.2 1245.5,286.8" fill="#ffff00"/><polygon points="1285.4,290.3 1309.3,295.7 1293.2,297.6 1269.4,292.2" fill="#ffff00"/><polygon points="1309.3,295.7 1333.1,301.1 1317.1,303.0 1293.2,297.6" fill="#ffff00"/><polygon points="1333.1,301.1 1357.0,306.5 1341.0,308.4 1317.1,303.0" fill="#ffff00"/><polygon points="984.1,227.5 1007.8,232.9 991.8,234.8 968.1,229.4" fill="#ffff00"/><polygon points="1007.8,232.9 1031.5,238.3 1015.5,240.2 991.8,234.8" fill="#ffff00"/><polygon points="1031.5,238.3 1055.3,243.6 1039.2,245.6 1015.5,240.2" fill="#ffff00"/><polygon points="1055.3,243.6 1079.0,262.1 1062.9,264.1 1039.2,245.6" fill="#ffff00"/><polygon points="1079.0,262.1 1102.7,267.5 1086.7,269.4 1062.9,264.1" fill="#f4ff00"/><polygon points="1102.7,267.5 1126.5,272.9 1110.5,274.8 1086.7,269.4" fill="#f4ff00"/><polygon points="1126.5,272.9 1150.3,278.3 1134.2,280.2 1110.5,274.8" fill="#f4ff00"/><polygon points="1150.3,278.3 1174.1,270.6 1158.0,272.5 1134.2,280.2" fill="#f4ff00"/><polygon points="1174.1,270.6 1197.9,276.0 1181.8,277.9 1158.0,272.5" fill="#ffff00"/><polygon points="1197.9,276.0 1221.7,281.4 1205.6,283.3 1181.8,277.9" fill="#ffff00"/><polygon points="1221.7,281.4 1245.5,286.8 1229.5,288.7 1205.6,283.3" fill="#ffff00"/><polygon points="1245.5,286.8 1269.4,292.2 1253.3,294.1 1229.5,288.7" fill="#ffff00"/><polygon points="1269.4,292.2 1293.2,297.6 1277.2,299.5 1253.3,294.1" fill="#ffff00"/><polygon points="1293.2,297.6 1317.1,303.0 1301.0,304.9 1277.2,299.5" fill="#ffff00"/><polygon points="1317.1,303.0 1341.0,308.4 1324.9,310.3 1301.0,304.9" fill="#ffff00"/><polygon points="968.1,229.4 991.8,234.8 975.8,236.7 952.1,231.3" fill="#ffff00"/><polygon points="991.8,234.8 1015.5,240.2 999.5,242.1 975.8,236.7" fill="#ffff00"/><polygon points="1015.5,240.2 1039.2,245.6 1023.2,247.5 999.5,242.1" fill="#ffff00"/><polygon points="1039.2,245.6 1062.9,264.1 1046.9,292.2 1023.2,247.5" fill="#ffff00"/><polygon points="1062.9,264.1 1086.7,269.4 1070.6,310.7 1046.9,292.2" fill="#f4ff00"/><polygon points="1086.7,269.4 1110.5,274.8 1094.4,309.6 1070.6,310.7" fill="#f4ff00"/><polygon points="1110.5,274.8 1134.2,280.2 1118.1,315.0 1094.4,309.6" fill="#f4ff00"/><polygon points="1134.2,280.2 1158.0,272.5 1141.9,320.4 1118.1,315.0" fill="#f4ff00"/><polygon points="1158.0,272.5 1181.8,277.9 1165.7,325.8 1141.9,320.4" fill="#ffff00"/><polygon points="1181.8,277.9 1205.6,283.3 1189.5,331.2 1165.7,325.8" fill="#ffff00"/><polygon points="1205.6,283.3 1229.5,288.7 1213.4,336.6 1189.5,331.2" fill="#ffff00"/><polygon points="1229.5,288.7 1253.3,294.1 1237.2,342.1 1213.4,336.6" fill="#ffff00"/><polygon points="1253.3,294.1 1277.2,299.5 1261.0,347.5 1237.2,342.1" fill="#ffff00"/><polygon points="1277.2,299.5 1301.0,304.9 1284.9,352.9 1261.0,347.5" fill="#ffff00"/><polygon points="1301.0,304.9 1324.9,310.3 1308.8,358.3 1284.9,352.9" fill="#ffff00"/><polygon points="952.1,231.3 975.8,236.7 959.7,264.8 936.0,279.1" fill="#ffff00"/><polygon points="975.8,236.7 999.5,242.1 983.4,270.2 959.7,264.8" fill="#ffff00"/><polygon points="999.5,242.1 1023.2,247.5 1007.1,308.4 983.4,270.2" fill="#ffff00"/><polygon points="1023.2,247.5 1046.9,292.2 1030.8,313.8 1007.1,308.4" fill="#ffff00"/><polygon points="1046.9,292.2 1070.6,310.7 1054.5,352.0 1030.8,313.8" fill="#dfff00"/><polygon points="1070.6,310.7 1094.4,309.6 1078.2,357.5 1054.5,352.0" fill="#d4ff00"/><polygon points="1094.4,309.6 1118.1,315.0 1102.0,362.9 1078.2,357.5" fill="#daff00"/><polygon points="1118.1,315.0 1141.9,320.4 1125.8,368.3 1102.0,362.9" fill="#daff00"/><polygon points="1141.9,320.4 1165.7,325.8 1149.6,373.7 1125.8,368.3" fill="#daff00"/><polygon points="1165.7,325.8 1189.5,331.2 1173.4,379.2 1149.6,373.7" fill="#daff00"/><polygon points="1189.5,331.2 1213.4,336.6 1197.2,384.6 1173.4,379.2" fill="#daff00"/><polygon points="1213.4,336.6 1237.2,342.1 1221.1,390.0 1197.2,384.6" fill="#daff00"/><polygon points="1237.2,342.1 1261.0,347.5 1244.9,395.5 1221.1,390.0" fill="#daff00"/><polygon points="1261.0,347.5 1284.9,352.9 1268.8,400.9 1244.9,395.5" fill="#daff00"/><polygon points="1284.9,352.9 1308.8,358.3 1292.7,406.3 1268.8,400.9" fill="#daff00"/><polygon points="936.0,279.1 959.7,264.8 943.7,266.8 920.0,281.0" fill="#daff00"/><polygon points="959.7,264.8 983.4,270.2 967.4,265.6 943.7,266.8" fill="#eaff00"/><polygon points="983.4,270.2 1007.1,308.4 991.0,316.9 967.4,265.6" fill="#eaff00"/><polygon points="1007.1,308.4 1030.8,313.8 1014.7,335.4 991.0,316.9" fill="#cfff00"/><polygon points="1030.8,313.8 1054.5,352.0 1038.4,406.5 1014.7,335.4" fill="#cfff00"/><polygon points="1054.5,352.0 1078.2,357.5 1062.1,411.9 1038.4,406.5" fill="#b4fe01"/><polygon points="1078.2,357.5 1102.0,362.9 1085.9,417.4 1062.1,411.9" fill="#b4fe01"/><polygon points="1102.0,362.9 1125.8,368.3 1109.7,422.8 1085.9,417.4" fill="#b4fe01"/><polygon points="1125.8,368.3 1149.6,373.7 1133.5,428.2 1109.7,422.8" fill="#b4fe01"/><polygon points="1149.6,373.7 1173.4,379.2 1157.3,433.7 1133.5,428.2" fill="#b4fe01"/><polygon points="1173.4,379.2 1197.2,384.6 1181.1,439.1 1157.3,433.7" fill="#b4fe01"/><polygon points="1197.2,384.6 1221.1,390.0 1204.9,444.6 1181.1,439.1" fill="#b4fe01"/><polygon points="1221.1,390.0 1244.9,395.5 1228.8,450.0 1204.9,444.6" fill="#b4fe01"/><polygon points="1244.9,395.5 1268.8,400.9 1252.7,455.5 1228.8,450.0" fill="#b4fe01"/><polygon points="1268.8,400.9 1292.7,406.3 1276.5,461.0 1252.7,455.5" fill="#b4fe01"/><polygon points="920.0,281.0 943.7,266.8 927.7,268.7 904.0,283.0" fill="#daff00"/><polygon points="943.7,266.8 967.4,265.6 951.4,267.5 927.7,268.7" fill="#eaff00"/><polygon points="967.4,265.6 991.0,316.9 975.0,318.8 951.4,267.5" fill="#efff00"/><polygon points="991.0,316.9 1014.7,335.4 998.7,337.3 975.0,318.8" fill="#c9ff00"/><polygon points="1014.7,335.4 1038.4,406.5 1022.3,408.4 998.7,337.3" fill="#bffe01"/><polygon points="1038.4,406.5 1062.1,411.9 1046.1,413.8 1022.3,408.4" fill="#89fd02"/><polygon points="1062.1,411.9 1085.9,417.4 1069.8,432.4 1046.1,413.8" fill="#89fd02"/><polygon points="1085.9,417.4 1109.7,422.8 1093.6,437.9 1069.8,432.4" fill="#89fd02"/><polygon points="1109.7,422.8 1133.5,428.2 1117.4,443.3 1093.6,437.9" fill="#89fd02"/><polygon points="1133.5,428.2 1157.3,433.7 1141.2,448.8 1117.4,443.3" fill="#89fd02"/><polygon points="1157.3,433.7 1181.1,439.1 1165.0,454.2 1141.2,448.8" fill="#89fd02"/><polygon points="1181.1,439.1 1204.9,444.6 1188.9,459.7 1165.0,454.2" fill="#89fd02"/><polygon points="1204.9,444.6 1228.8,450.0 1212.7,465.1 1188.9,459.7" fill="#89fd02"/><polygon points="1228.8,450.0 1252.7,455.5 1236.6,470.6 1212.7,465.1" fill="#89fd02"/><polygon points="1252.7,455.5 1276.5,461.0 1260.4,476.1 1236.6,470.6" fill="#89fd02"/><polygon points="904.0,283.0 927.7,268.7 911.7,270.6 887.9,284.9" fill="#daff00"/><polygon points="927.7,268.7 951.4,267.5 935.4,269.4 911.7,270.6" fill="#eaff00"/><polygon points="951.4,267.5 975.0,318.8 959.0,301.1 935.4,269.4" fill="#efff00"/><polygon points="975.0,318.8 998.7,337.3 982.7,339.3 959.0,301.1" fill="#c9ff00"/><polygon points="998.7,337.3 1022.3,408.4 1006.3,410.3 982.7,339.3" fill="#bffe01"/><polygon points="1022.3,408.4 1046.1,413.8 1030.0,415.8 1006.3,410.3" fill="#89fd02"/><polygon points="1046.1,413.8 1069.8,432.4 1053.7,486.9 1030.0,415.8" fill="#89fd02"/><polygon points="1069.8,432.4 1093.6,437.9 1077.4,492.4 1053.7,486.9" fill="#7efd02"/><polygon points="1093.6,437.9 1117.4,443.3 1101.2,497.9 1077.4,492.4" fill="#7efd02"/><polygon points="1117.4,443.3 1141.2,448.8 1125.1,503.3 1101.2,497.9" fill="#7efd02"/><polygon points="1141.2,448.8 1165.0,454.2 1148.9,508.8 1125.1,503.3" fill="#7efd02"/><polygon points="1165.0,454.2 1188.9,459.7 1172.7,514.3 1148.9,508.8" fill="#7efd02"/><polygon points="1188.9,459.7 1212.7,465.1 1196.6,519.7 1172.7,514.3" fill="#7efd02"/><polygon points="1212.7,465.1 1236.6,470.6 1220.4,525.2 1196.6,519.7" fill="#7efd02"/><polygon points="1236.6,470.6 1260.4,476.1 1244.3,530.7 1220.4,525.2" fill="#7efd02"/><polygon points="887.9,284.9 911.7,270.6 895.6,272.5 871.9,286.8" fill="#daff00"/><polygon points="911.7,270.6 935.4,269.4 919.3,271.3 895.6,272.5" fill="#eaff00"/><polygon points="935.4,269.4 959.0,301.1 943.0,303.0 919.3,271.3" fill="#efff00"/><polygon points="959.0,301.1 982.7,339.3 966.6,341.2 943.0,303.0" fill="#daff00"/><polygon points="982.7,339.3 1006.3,410.3 990.2,412.3 966.6,341.2" fill="#bffe01"/><polygon points="1006.3,410.3 1030.0,415.8 1014.0,417.7 990.2,412.3" fill="#89fd02"/><polygon points="1030.0,415.8 1053.7,486.9 1037.6,502.0 1014.0,417.7" fill="#89fd02"/><polygon points="1053.7,486.9 1077.4,492.4 1061.4,507.5 1037.6,502.0" fill="#54fb04"/><polygon points="1077.4,492.4 1101.2,497.9 1085.2,512.9 1061.4,507.5" fill="#54fb04"/><polygon points="1101.2,497.9 1125.1,503.3 1109.0,518.4 1085.2,512.9" fill="#54fb04"/><polygon points="1125.1,503.3 1148.9,508.8 1132.8,523.9 1109.0,518.4" fill="#54fb04"/><polygon points="1148.9,508.8 1172.7,514.3 1156.6,529.4 1132.8,523.9" fill="#54fb04"/><polygon points="1172.7,514.3 1196.6,519.7 1180.5,534.9 1156.6,529.4" fill="#54fb04"/><polygon points="1196.6,519.7 1220.4,525.2 1204.3,540.3 1180.5,534.9" fill="#54fb04"/><polygon points="1220.4,525.2 1244.3,530.7 1228.2,545.8 1204.3,540.3" fill="#54fb04"/><polygon points="871.9,286.8 895.6,272.5 879.6,274.4 855.9,288.7" fill="#daff00"/><polygon points="895.6,272.5 919.3,271.3 903.3,273.3 879.6,274.4" fill="#eaff00"/><polygon points="919.3,271.3 943.0,303.0 927.0,304.9 903.3,273.3" fill="#efff00"/><polygon points="943.0,303.0 966.6,341.2 950.6,343.1 927.0,304.9" fill="#daff00"/><polygon points="966.6,341.2 990.2,412.3 974.2,427.3 950.6,343.1" fill="#bffe01"/><polygon points="990.2,412.3 1014.0,417.7 997.8,485.3 974.2,427.3" fill="#89fd02"/><polygon points="1014.0,417.7 1037.6,502.0 1021.5,517.1 997.8,485.3" fill="#89fd02"/><polygon points="1037.6,502.0 1061.4,507.5 1045.3,522.6 1021.5,517.1" fill="#49fa05"/><polygon points="1061.4,507.5 1085.2,512.9 1069.1,528.0 1045.3,522.6" fill="#49fa05"/><polygon points="1085.2,512.9 1109.0,518.4 1092.9,533.5 1069.1,528.0" fill="#49fa05"/><polygon points="1109.0,518.4 1132.8,523.9 1116.7,539.0 1092.9,533.5" fill="#49fa05"/><polygon points="1132.8,523.9 1156.6,529.4 1140.5,544.5 1116.7,539.0" fill="#49fa05"/><polygon points="1156.6,529.4 1180.5,534.9 1164.4,550.0 1140.5,544.5" fill="#49fa05"/><polygon points="1180.5,534.9 1204.3,540.3 1188.2,555.4 1164.4,550.0" fill="#49fa05"/><polygon points="1204.3,540.3 1228.2,545.8 1212.1,560.9 1188.2,555.4" fill="#49fa05"/><polygon points="855.9,288.7 879.6,274.4 863.6,276.3 839.9,290.6" fill="#daff00"/><polygon points="879.6,274.4 903.3,273.3 887.3,275.2 863.6,276.3" fill="#eaff00"/><polygon points="903.3,273.3 927.0,304.9 911.0,280.6 887.3,275.2" fill="#efff00"/><polygon points="927.0,304.9 950.6,343.1 934.7,286.0 911.0,280.6" fill="#daff00"/><polygon points="950.6,343.1 974.2,427.3 958.0,462.1 934.7,286.0" fill="#bffe01"/><polygon points="974.2,427.3 997.8,485.3 981.7,507.0 958.0,462.1" fill="#7efd02"/><polygon points="997.8,485.3 1021.5,517.1 1005.4,532.2 981.7,507.0" fill="#54fb04"/><polygon points="1021.5,517.1 1045.3,522.6 1029.2,537.7 1005.4,532.2" fill="#3efa05"/><polygon points="1045.3,522.6 1069.1,528.0 1053.0,543.1 1029.2,537.7" fill="#3efa05"/><polygon points="1069.1,528.0 1092.9,533.5 1076.8,548.6 1053.0,543.1" fill="#3efa05"/><polygon points="1092.9,533.5 1116.7,539.0 1100.6,554.1 1076.8,548.6" fill="#3efa05"/><polygon points="1116.7,539.0 1140.5,544.5 1124.4,559.6 1100.6,554.1" fill="#3efa05"/><polygon points="1140.5,544.5 1164.4,550.0 1148.3,565.1 1124.4,559.6" fill="#3efa05"/><polygon points="1164.4,550.0 1188.2,555.4 1172.1,570.6 1148.3,565.1" fill="#3efa05"/><polygon points="1188.2,555.4 1212.1,560.9 1196.0,576.1 1172.1,570.6" fill="#3efa05"/><polygon points="839.9,290.6 863.6,276.3 847.6,278.3 823.9,292.5" fill="#daff00"/><polygon points="863.6,276.3 887.3,275.2 871.3,277.1 847.6,278.3" fill="#eaff00"/><polygon points="887.3,275.2 911.0,280.6 894.9,282.5 871.3,277.1" fill="#efff00"/><polygon points="911.0,280.6 934.7,286.0 918.7,287.9 894.9,282.5" fill="#efff00"/><polygon points="934.7,286.0 958.0,462.1 941.9,490.3 918.7,287.9" fill="#efff00"/><polygon points="958.0,462.1 981.7,507.0 965.6,528.6 941.9,490.3" fill="#64fc03"/><polygon points="981.7,507.0 1005.4,532.2 989.3,553.8 965.6,528.6" fill="#44fa05"/><polygon points="1005.4,532.2 1029.2,537.7 1013.1,559.3 989.3,553.8" fill="#33f906"/><polygon points="1029.2,537.7 1053.0,543.1 1036.9,564.8 1013.1,559.3" fill="#33f906"/><polygon points="1053.0,543.1 1076.8,548.6 1060.7,570.3 1036.9,564.8" fill="#33f906"/><polygon points="1076.8,548.6 1100.6,554.1 1084.5,575.8 1060.7,570.3" fill="#33f906"/><polygon points="1100.6,554.1 1124.4,559.6 1108.3,581.3 1084.5,575.8" fill="#33f906"/><polygon points="1124.4,559.6 1148.3,565.1 1132.2,586.8 1108.3,581.3" fill="#33f906"/><polygon points="1148.3,565.1 1172.1,570.6 1156.0,592.3 1132.2,586.8" fill="#33f906"/><polygon points="1172.1,570.6 1196.0,576.1 1179.9,597.8 1156.0,592.3" fill="#33f906"/><polygon points="823.9,292.5 847.6,278.3 831.5,280.2 807.8,294.5" fill="#daff00"/><polygon points="847.6,278.3 871.3,277.1 855.2,279.0 831.5,280.2" fill="#eaff00"/><polygon points="871.3,277.1 894.9,282.5 878.9,284.4 855.2,279.0" fill="#efff00"/><polygon points="894.9,282.5 918.7,287.9 902.6,289.8 878.9,284.4" fill="#efff00"/><polygon points="918.7,287.9 941.9,490.3 925.8,525.1 902.6,289.8" fill="#efff00"/><polygon points="941.9,490.3 965.6,528.6 949.5,550.3 925.8,525.1" fill="#4efb04"/><polygon points="965.6,528.6 989.3,553.8 973.3,562.4 949.5,550.3" fill="#33f906"/><polygon points="989.3,553.8 1013.1,559.3 997.0,567.8 973.3,562.4" fill="#23f807"/><polygon points="1013.1,559.3 1036.9,564.8 1020.8,573.3 997.0,567.8" fill="#23f807"/><polygon points="1036.9,564.8 1060.7,570.3 1044.6,578.8 1020.8,573.3" fill="#23f807"/><polygon points="1060.7,570.3 1084.5,575.8 1068.4,584.3 1044.6,578.8" fill="#23f807"/><polygon points="1084.5,575.8 1108.3,581.3 1092.2,589.8 1068.4,584.3" fill="#23f807"/><polygon points="1108.3,581.3 1132.2,586.8 1116.1,595.3 1092.2,589.8" fill="#23f807"/><polygon points="1132.2,586.8 1156.0,592.3 1139.9,600.8 1116.1,595.3" fill="#23f807"/><polygon points="1156.0,592.3 1179.9,597.8 1163.8,606.3 1139.9,600.8" fill="#23f807"/><polygon points="807.8,294.5 831.5,280.2 815.5,282.1 791.8,296.4" fill="#daff00"/><polygon points="831.5,280.2 855.2,279.0 839.2,280.9 815.5,282.1" fill="#eaff00"/><polygon points="855.2,279.0 878.9,284.4 862.9,286.3 839.2,280.9" fill="#efff00"/><polygon points="878.9,284.4 902.6,289.8 886.6,291.7 862.9,286.3" fill="#efff00"/><polygon points="902.6,289.8 925.8,525.1 909.7,546.8 886.6,291.7" fill="#efff00"/><polygon points="925.8,525.1 949.5,550.3 933.4,572.0 909.7,546.8" fill="#33f906"/><polygon points="949.5,550.3 973.3,562.4 957.2,570.9 933.4,572.0" fill="#23f807"/><polygon points="973.3,562.4 997.0,567.8 980.9,576.4 957.2,570.9" fill="#1ef807"/><polygon points="997.0,567.8 1020.8,573.3 1004.7,581.8 980.9,576.4" fill="#1ef807"/><polygon points="1020.8,573.3 1044.6,578.8 1028.5,587.3 1004.7,581.8" fill="#1ef807"/><polygon points="1044.6,578.8 1068.4,584.3 1052.3,592.8 1028.5,587.3" fill="#1ef807"/><polygon points="1068.4,584.3 1092.2,589.8 1076.1,598.3 1052.3,592.8" fill="#1ef807"/><polygon points="1092.2,589.8 1116.1,595.3 1100.0,603.8 1076.1,598.3" fill="#1ef807"/><polygon points="1116.1,595.3 1139.9,600.8 1123.8,609.3 1100.0,603.8" fill="#1ef807"/><polygon points="1139.9,600.8 1163.8,606.3 1147.7,614.8 1123.8,609.3" fill="#1ef807"/><polygon points="791.8,296.4 815.5,282.1 799.5,284.0 775.8,298.3" fill="#daff00"/><polygon points="815.5,282.1 839.2,280.9 823.2,282.9 799.5,284.0" fill="#eaff00"/><polygon points="839.2,280.9 862.9,286.3 846.8,288.2 823.2,282.9" fill="#efff00"/><polygon points="862.9,286.3 886.6,291.7 870.5,293.6 846.8,288.2" fill="#efff00"/><polygon points="886.6,291.7 909.7,546.8 893.6,575.0 870.5,293.6" fill="#efff00"/><polygon points="909.7,546.8 933.4,572.0 917.3,580.5 893.6,575.0" fill="#23f807"/><polygon points="933.4,572.0 957.2,570.9 941.1,586.0 917.3,580.5" fill="#13f708"/><polygon points="957.2,570.9 980.9,576.4 964.9,591.5 941.1,586.0" fill="#19f807"/><polygon points="980.9,576.4 1004.7,581.8 988.6,597.0 964.9,591.5" fill="#19f807"/><polygon points="1004.7,581.8 1028.5,587.3 1012.4,602.4 988.6,597.0" fill="#19f807"/><polygon points="1028.5,587.3 1052.3,592.8 1036.2,607.9 1012.4,602.4" fill="#19f807"/><polygon points="1052.3,592.8 1076.1,598.3 1060.0,613.5 1036.2,607.9" fill="#19f807"/><polygon points="1076.1,598.3 1100.0,603.8 1083.9,619.0 1060.0,613.5" fill="#19f807"/><polygon points="1100.0,603.8 1123.8,609.3 1107.7,624.5 1083.9,619.0" fill="#19f807"/><polygon points="1123.8,609.3 1147.7,614.8 1131.6,630.0 1107.7,624.5" fill="#19f807"/><line x1="1131.6" y1="630.0" x2="1372.8" y2="600.8" stroke="#8c8c8c" stroke-width="1"/><line x1="775.9" y1="252.4" x2="1132.1" y2="333.5" stroke="#5b3a18" stroke-width="1"/><line x1="1132.1" y1="333.5" x2="1373.1" y2="304.6" stroke="#5b3a18" stroke-width="1"/><line x1="1131.6" y1="630.0" x2="1132.1" y2="333.5" stroke="#5a5a4a" stroke-width="1"/><line x1="775.9" y1="252.4" x2="869.2" y2="273.6" stroke="#6e6e6e"/><path d="M1161.2,328.3 L1161.2,325.3 Q1161.7,321.3 1165.7,321.3 Q1169.7,321.3 1170.2,325.3 L1170.2,328.3 L1168.2,328.3 L1165.7,326.6 L1163.2,328.3Z" fill="#000" stroke="none"/><path d="M1185.0,333.7 L1185.0,330.7 Q1185.5,326.7 1189.5,326.7 Q1193.5,326.7 1194.0,330.7 L1194.0,333.7 L1192.0,333.7 L1189.5,332.0 L1187.0,333.7Z" fill="#000" stroke="none"/><path d="M1208.9,339.1 L1208.9,336.1 Q1209.4,332.1 1213.4,332.1 Q1217.4,332.1 1217.9,336.1 L1217.9,339.1 L1215.9,339.1 L1213.4,337.4 L1210.9,339.1Z" fill="#000" stroke="none"/><path d="M1232.7,344.6 L1232.7,341.6 Q1233.2,337.6 1237.2,337.6 Q1241.2,337.6 1241.7,341.6 L1241.7,344.6 L1239.7,344.6 L1237.2,342.9 L1234.7,344.6Z" fill="#000" stroke="none"/><path d="M1256.5,350.0 L1256.5,347.0 Q1257.0,343.0 1261.0,343.0 Q1265.0,343.0 1265.5,347.0 L1265.5,350.0 L1263.5,350.0 L1261.0,348.3 L1258.5,350.0Z" fill="#000" stroke="none"/><path d="M1145.1,376.2 L1145.1,373.2 Q1145.6,369.2 1149.6,369.2 Q1153.6,369.2 1154.1,373.2 L1154.1,376.2 L1152.1,376.2 L1149.6,374.5 L1147.1,376.2Z" fill="#000" stroke="none"/><path d="M1168.9,381.7 L1168.9,378.7 Q1169.4,374.7 1173.4,374.7 Q1177.4,374.7 1177.9,378.7 L1177.9,381.7 L1175.9,381.7 L1173.4,380.0 L1170.9,381.7Z" fill="#000" stroke="none"/><path d="M1192.7,387.1 L1192.7,384.1 Q1193.2,380.1 1197.2,380.1 Q1201.2,380.1 1201.7,384.1 L1201.7,387.1 L1199.7,387.1 L1197.2,385.4 L1194.7,387.1Z" fill="#000" stroke="none"/><path d="M1216.6,392.5 L1216.6,389.5 Q1217.1,385.5 1221.1,385.5 Q1225.1,385.5 1225.6,389.5 L1225.6,392.5 L1223.6,392.5 L1221.1,390.8 L1218.6,392.5Z" fill="#000" stroke="none"/><path d="M1240.4,398.0 L1240.4,395.0 Q1240.9,391.0 1244.9,391.0 Q1248.9,391.0 1249.4,395.0 L1249.4,398.0 L1247.4,398.0 L1244.9,396.3 L1242.4,398.0Z" fill="#000" stroke="none"/><path d="M1129.0,430.7 L1129.0,427.7 Q1129.5,423.7 1133.5,423.7 Q1137.5,423.7 1138.0,427.7 L1138.0,430.7 L1136.0,430.7 L1133.5,429.0 L1131.0,430.7Z" fill="#000" stroke="none"/><path d="M1152.8,436.2 L1152.8,433.2 Q1153.3,429.2 1157.3,429.2 Q1161.3,429.2 1161.8,433.2 L1161.8,436.2 L1159.8,436.2 L1157.3,434.5 L1154.8,436.2Z" fill="#000" stroke="none"/><path d="M1176.6,441.6 L1176.6,438.6 Q1177.1,434.6 1181.1,434.6 Q1185.1,434.6 1185.6,438.6 L1185.6,441.6 L1183.6,441.6 L1181.1,439.9 L1178.6,441.6Z" fill="#000" stroke="none"/><path d="M1200.4,447.1 L1200.4,444.1 Q1200.9,440.1 1204.9,440.1 Q1208.9,440.1 1209.4,444.1 L1209.4,447.1 L1207.4,447.1 L1204.9,445.4 L1202.4,447.1Z" fill="#000" stroke="none"/><path d="M1224.3,452.5 L1224.3,449.5 Q1224.8,445.5 1228.8,445.5 Q1232.8,445.5 1233.3,449.5 L1233.3,452.5 L1231.3,452.5 L1228.8,450.8 L1226.3,452.5Z" fill="#000" stroke="none"/><path d="M1112.9,445.8 L1112.9,442.8 Q1113.4,438.8 1117.4,438.8 Q1121.4,438.8 1121.9,442.8 L1121.9,445.8 L1119.9,445.8 L1117.4,444.1 L1114.9,445.8Z" fill="#000" stroke="none"/><path d="M1136.7,451.3 L1136.7,448.3 Q1137.2,444.3 1141.2,444.3 Q1145.2,444.3 1145.7,448.3 L1145.7,451.3 L1143.7,451.3 L1141.2,449.6 L1138.7,451.3Z" fill="#000" stroke="none"/><path d="M1160.5,456.7 L1160.5,453.7 Q1161.0,449.7 1165.0,449.7 Q1169.0,449.7 1169.5,453.7 L1169.5,456.7 L1167.5,456.7 L1165.0,455.0 L1162.5,456.7Z" fill="#000" stroke="none"/><path d="M1184.4,462.2 L1184.4,459.2 Q1184.9,455.2 1188.9,455.2 Q1192.9,455.2 1193.4,459.2 L1193.4,462.2 L1191.4,462.2 L1188.9,460.5 L1186.4,462.2Z" fill="#000" stroke="none"/><path d="M1208.2,467.6 L1208.2,464.6 Q1208.7,460.6 1212.7,460.6 Q1216.7,460.6 1217.2,464.6 L1217.2,467.6 L1215.2,467.6 L1212.7,465.9 L1210.2,467.6Z" fill="#000" stroke="none"/><path d="M1096.7,500.4 L1096.7,497.4 Q1097.2,493.4 1101.2,493.4 Q1105.2,493.4 1105.7,497.4 L1105.7,500.4 L1103.7,500.4 L1101.2,498.7 L1098.7,500.4Z" fill="#000" stroke="none"/><path d="M1120.6,505.8 L1120.6,502.8 Q1121.1,498.8 1125.1,498.8 Q1129.1,498.8 1129.6,502.8 L1129.6,505.8 L1127.6,505.8 L1125.1,504.1 L1122.6,505.8Z" fill="#000" stroke="none"/><path d="M1144.4,511.3 L1144.4,508.3 Q1144.9,504.3 1148.9,504.3 Q1152.9,504.3 1153.4,508.3 L1153.4,511.3 L1151.4,511.3 L1148.9,509.6 L1146.4,511.3Z" fill="#000" stroke="none"/><path d="M1168.2,516.8 L1168.2,513.8 Q1168.7,509.8 1172.7,509.8 Q1176.7,509.8 1177.2,513.8 L1177.2,516.8 L1175.2,516.8 L1172.7,515.1 L1170.2,516.8Z" fill="#000" stroke="none"/><path d="M1192.1,522.2 L1192.1,519.2 Q1192.6,515.2 1196.6,515.2 Q1200.6,515.2 1201.1,519.2 L1201.1,522.2 L1199.1,522.2 L1196.6,520.5 L1194.1,522.2Z" fill="#000" stroke="none"/><path d="M1080.7,515.4 L1080.7,512.4 Q1081.2,508.4 1085.2,508.4 Q1089.2,508.4 1089.7,512.4 L1089.7,515.4 L1087.7,515.4 L1085.2,513.7 L1082.7,515.4Z" fill="#000" stroke="none"/><path d="M1104.5,520.9 L1104.5,517.9 Q1105.0,513.9 1109.0,513.9 Q1113.0,513.9 1113.5,517.9 L1113.5,520.9 L1111.5,520.9 L1109.0,519.2 L1106.5,520.9Z" fill="#000" stroke="none"/><path d="M1128.3,526.4 L1128.3,523.4 Q1128.8,519.4 1132.8,519.4 Q1136.8,519.4 1137.3,523.4 L1137.3,526.4 L1135.3,526.4 L1132.8,524.7 L1130.3,526.4Z" fill="#000" stroke="none"/><path d="M1152.1,531.9 L1152.1,528.9 Q1152.6,524.9 1156.6,524.9 Q1160.6,524.9 1161.1,528.9 L1161.1,531.9 L1159.1,531.9 L1156.6,530.2 L1154.1,531.9Z" fill="#000" stroke="none"/><path d="M1176.0,537.4 L1176.0,534.4 Q1176.5,530.4 1180.5,530.4 Q1184.5,530.4 1185.0,534.4 L1185.0,537.4 L1183.0,537.4 L1180.5,535.7 L1178.0,537.4Z" fill="#000" stroke="none"/><path d="M1064.6,530.5 L1064.6,527.5 Q1065.1,523.5 1069.1,523.5 Q1073.1,523.5 1073.6,527.5 L1073.6,530.5 L1071.6,530.5 L1069.1,528.8 L1066.6,530.5Z" fill="#000" stroke="none"/><path d="M1088.4,536.0 L1088.4,533.0 Q1088.9,529.0 1092.9,529.0 Q1096.9,529.0 1097.4,533.0 L1097.4,536.0 L1095.4,536.0 L1092.9,534.3 L1090.4,536.0Z" fill="#000" stroke="none"/><path d="M1112.2,541.5 L1112.2,538.5 Q1112.7,534.5 1116.7,534.5 Q1120.7,534.5 1121.2,538.5 L1121.2,541.5 L1119.2,541.5 L1116.7,539.8 L1114.2,541.5Z" fill="#000" stroke="none"/><path d="M1136.0,547.0 L1136.0,544.0 Q1136.5,540.0 1140.5,540.0 Q1144.5,540.0 1145.0,544.0 L1145.0,547.0 L1143.0,547.0 L1140.5,545.3 L1138.0,547.0Z" fill="#000" stroke="none"/><path d="M1159.9,552.5 L1159.9,549.5 Q1160.4,545.5 1164.4,545.5 Q1168.4,545.5 1168.9,549.5 L1168.9,552.5 L1166.9,552.5 L1164.4,550.8 L1161.9,552.5Z" fill="#000" stroke="none"/><path d="M1048.5,545.6 L1048.5,542.6 Q1049.0,538.6 1053.0,538.6 Q1057.0,538.6 1057.5,542.6 L1057.5,545.6 L1055.5,545.6 L1053.0,543.9 L1050.5,545.6Z" fill="#000" stroke="none"/><path d="M1072.3,551.1 L1072.3,548.1 Q1072.8,544.1 1076.8,544.1 Q1080.8,544.1 1081.3,548.1 L1081.3,551.1 L1079.3,551.1 L1076.8,549.4 L1074.3,551.1Z" fill="#000" stroke="none"/><path d="M1096.1,556.6 L1096.1,553.6 Q1096.6,549.6 1100.6,549.6 Q1104.6,549.6 1105.1,553.6 L1105.1,556.6 L1103.1,556.6 L1100.6,554.9 L1098.1,556.6Z" fill="#000" stroke="none"/><path d="M1119.9,562.1 L1119.9,559.1 Q1120.4,555.1 1124.4,555.1 Q1128.4,555.1 1128.9,559.1 L1128.9,562.1 L1126.9,562.1 L1124.4,560.4 L1121.9,562.1Z" fill="#000" stroke="none"/><path d="M1143.8,567.6 L1143.8,564.6 Q1144.3,560.6 1148.3,560.6 Q1152.3,560.6 1152.8,564.6 L1152.8,567.6 L1150.8,567.6 L1148.3,565.9 L1145.8,567.6Z" fill="#000" stroke="none"/><path d="M1032.4,567.3 L1032.4,564.3 Q1032.9,560.3 1036.9,560.3 Q1040.9,560.3 1041.4,564.3 L1041.4,567.3 L1039.4,567.3 L1036.9,565.6 L1034.4,567.3Z" fill="#000" stroke="none"/><path d="M1056.2,572.8 L1056.2,569.8 Q1056.7,565.8 1060.7,565.8 Q1064.7,565.8 1065.2,569.8 L1065.2,572.8 L1063.2,572.8 L1060.7,571.1 L1058.2,572.8Z" fill="#000" stroke="none"/><path d="M1080.0,578.3 L1080.0,575.3 Q1080.5,571.3 1084.5,571.3 Q1088.5,571.3 1089.0,575.3 L1089.0,578.3 L1087.0,578.3 L1084.5,576.6 L1082.0,578.3Z" fill="#000" stroke="none"/><path d="M1103.8,583.8 L1103.8,580.8 Q1104.3,576.8 1108.3,576.8 Q1112.3,576.8 1112.8,580.8 L1112.8,583.8 L1110.8,583.8 L1108.3,582.1 L1105.8,583.8Z" fill="#000" stroke="none"/><path d="M1127.7,589.3 L1127.7,586.3 Q1128.2,582.3 1132.2,582.3 Q1136.2,582.3 1136.7,586.3 L1136.7,589.3 L1134.7,589.3 L1132.2,587.6 L1129.7,589.3Z" fill="#000" stroke="none"/><path d="M1016.3,575.8 L1016.3,572.8 Q1016.8,568.8 1020.8,568.8 Q1024.8,568.8 1025.3,572.8 L1025.3,575.8 L1023.3,575.8 L1020.8,574.1 L1018.3,575.8Z" fill="#000" stroke="none"/><path d="M1040.1,581.3 L1040.1,578.3 Q1040.6,574.3 1044.6,574.3 Q1048.6,574.3 1049.1,578.3 L1049.1,581.3 L1047.1,581.3 L1044.6,579.6 L1042.1,581.3Z" fill="#000" stroke="none"/><path d="M1063.9,586.8 L1063.9,583.8 Q1064.4,579.8 1068.4,579.8 Q1072.4,579.8 1072.9,583.8 L1072.9,586.8 L1070.9,586.8 L1068.4,585.1 L1065.9,586.8Z" fill="#000" stroke="none"/><path d="M1087.7,592.3 L1087.7,589.3 Q1088.2,585.3 1092.2,585.3 Q1096.2,585.3 1096.7,589.3 L1096.7,592.3 L1094.7,592.3 L1092.2,590.6 L1089.7,592.3Z" fill="#000" stroke="none"/><path d="M1111.6,597.8 L1111.6,594.8 Q1112.1,590.8 1116.1,590.8 Q1120.1,590.8 1120.6,594.8 L1120.6,597.8 L1118.6,597.8 L1116.1,596.1 L1113.6,597.8Z" fill="#000" stroke="none"/></g></svg><div class="t b" style="left:761px;top:159px;color:#fff;font-size:13px;letter-spacing:.2px">Смесь</div>
<div class="abs" id="strip" style="left:0;top:0;width:1366px;height:79px;overflow:hidden;background:radial-gradient(ellipse 700px 200px at 620px -40px, rgba(40,110,190,.8), rgba(30,100,190,0) 100%),linear-gradient(90deg,#0a3d9c 0,#0b47a6 40%,#0b4498 100%)"><svg class="abs" style="left:16px;top:6px" width="42" height="48" viewBox="0 0 42 48">
<defs><linearGradient id="rbb" x1="0" y1="0" x2="1" y2="0"><stop offset="0" stop-color="#86b2e6" stop-opacity=".85"/><stop offset=".2" stop-color="#4a82d6" stop-opacity=".75"/><stop offset=".7" stop-color="#3468c4" stop-opacity=".7"/><stop offset="1" stop-color="#8cb6ea" stop-opacity=".85"/></linearGradient>
<linearGradient id="rcb" x1="0" y1="0" x2="0" y2="1"><stop offset="0" stop-color="#dcdcdc"/><stop offset=".5" stop-color="#b4b8c0"/><stop offset="1" stop-color="#7c8088"/></linearGradient></defs>
<path d="M3,6 L39,6 L32,44 Q21,48 10,44 Z" fill="url(#rbb)"/>
<path d="M9,35.5 Q12,32 21,32.5 Q30,32 33,35.5 L32,43.5 Q21,47.5 10,43.5Z" fill="url(#rcb)" fill-opacity=".82"/>
<ellipse cx="21" cy="6" rx="17.5" ry="3.2" fill="#4c86d8" stroke="#bcc0c8" stroke-width="1.5"/>
<path d="M9,18 q2,-4 6,-2 q3,-2 5,2 q3,2 1,6 q-3,4 -7,2 q-5,-2 -5,-8z" fill="#9cc0f0" fill-opacity=".35"/>
<path d="M28,14 L33,12 L30,30 L27,32Z" fill="#a8c8f4" fill-opacity=".3"/>
</svg><div class="ilbl" style="left:14px;top:58.5px">Корзина</div><div class="abs" style="left:88px;top:7px;width:48px;height:48px;background:#0b5cab;border:1px solid #dfe8f4;overflow:hidden">
<div class="abs" style="right:0;top:0;width:10px;height:10px;background:#f06414;border-left:1px solid #fff;border-bottom:1px solid #fff"></div>
<div class="abs" style="left:3px;top:14px;color:#e8f0ff;font-size:14px;line-height:14px;letter-spacing:.2px">Tec</div>
<div class="abs" style="left:20px;top:29px;color:#e8f0ff;font-size:14px;line-height:14px;letter-spacing:.2px">Doc</div>
</div><svg class="abs" style="left:89px;top:40px" width="15" height="15" viewBox="0 0 15 15"><rect x=".5" y=".5" width="14" height="14" fill="#e4ecf8" stroke="#8a8f98"/><path d="M3.2,12.5 Q2.6,6.2 8,6 L7.6,3.4 L12.6,6.6 L8.6,10.6 L8.3,8.6 Q5.2,8.6 5.6,12.5 Z" fill="#2a56a8"/><path d="M8.5,11.5 q2,.6 3.5,-.6 l0,2 l-4,0z" fill="#f2d8cc"/></svg><div class="abs" style="left:31px;top:46px;width:1028px;height:576px;border-radius:7px 7px 6px 6px;border:1px solid rgba(20,30,50,.75);box-shadow:0 0 0 1px rgba(0,0,0,.08),0 1px 10px 2px rgba(0,0,0,.35);background:radial-gradient(ellipse 104px 14px at 94px 15px,rgba(198,213,233,.95) 0,rgba(178,198,224,.85) 55%,rgba(150,180,220,0) 100%),linear-gradient(100deg,rgba(255,255,255,0) 300px,rgba(255,255,255,.06) 330px,rgba(255,255,255,0) 370px,rgba(255,255,255,0) 400px,rgba(255,255,255,.06) 440px,rgba(255,255,255,0) 480px),linear-gradient(90deg,#7c9cc6 0,#9cb4d4 40px,#8ea8ce 150px,#5a82b6 180px,#34629e 205px,#3a6aa4 320px,#3e6ea8 450px,#36669f 620px,#2a5896 800px,#2a5896 100%);overflow:hidden"><div class="abs" style="left:0;top:0;right:0;bottom:0;border-radius:6px 6px 5px 5px;border:1px solid rgba(255,255,255,.8)"></div><svg class="abs" style="left:6.5px;top:7px" width="18" height="17" viewBox="0 0 17 16"><circle cx="3.2" cy="1.7" r="1.5" fill="#e8380c"/><path d="M0.6,5.2 L4.6,4.6 L5.4,10.2 L9.6,3.2 Q10.2,2.2 11.4,2.2 L14.8,2.0 L14.6,3.6 L11.8,3.8 Q11.2,3.8 10.8,4.6 L5.2,14 L3.0,14 L2.2,6.4 L0.8,6.6 Z" fill="#e8380c"/></svg><div class="t" style="left:27px;top:7px;font-size:12px;letter-spacing:-.08px;text-shadow:0 0 6px #fff,0 0 8px #fff,0 0 10px rgba(255,255,255,.9)">Invent Commander 4.4.2</div></div><div class="abs" style="left:36px;top:74px;width:1016px;height:541px;border:1px solid rgba(255,255,255,.5);background:#f0f0f0;background-clip:padding-box"><div class="abs" style="left:0;top:0;right:0;bottom:0;border:1px solid #26374f;border-top-color:#1c2c44;border-bottom-color:#4a86a8"></div><div class="abs" style="left:1px;top:1px;right:1px;bottom:1px;border:1px solid #fff;border-right:0;border-bottom-color:#fdfdfd"></div></div><div class="abs" style="left:819px;top:47px;width:587px;height:577px;border-radius:2px 2px 2px 2px;border:1px solid #101820;box-shadow:0 0 0 1px rgba(0,0,0,.2),-1px 3px 10px 3px rgba(0,0,0,.62);background:radial-gradient(ellipse 60px 14px at 16px 13px,rgba(170,192,220,.9) 0,rgba(140,165,200,0) 100%),linear-gradient(90deg,#7c98be 0,#7391ba 100px,#7e9ac0 170px,#8ca4c6 200px,#8aa2c4 236px,#6486b4 242px,#33619e 250px,#2c5a98 330px,#26528f 460px,#4872a8 500px,#2a5694 547px);overflow:hidden"><div class="abs" style="left:0;top:0;right:0;bottom:0;border-radius:1px;border:1px solid rgba(255,255,255,.95)"></div><div class="abs" style="left:1px;top:24px;right:0;bottom:1px;background:linear-gradient(180deg,rgba(150,190,235,.0) 0,rgba(120,175,235,.35) 100%)"></div><div class="abs" style="left:1px;height:5px;right:0;bottom:1px;background:linear-gradient(90deg,#6c9ad2 0,#4c84c8 40px,#4a80c4 100%)"></div><div class="abs" style="left:190px;top:7px;width:46px;height:9px;background:#c8384a;filter:blur(2px);opacity:.75"></div><div class="abs" style="left:150px;top:8px;width:36px;height:7px;background:#7088b0;filter:blur(2px);opacity:.5"></div><div class="t" style="left:8px;top:5px;font-size:12px;text-shadow:0 0 6px #fff,0 0 8px #fff">3D</div></div><div class="abs" style="left:824px;top:70px;width:587px;height:549px;border:1px solid rgba(220,235,250,.7)"><div class="abs" style="left:0;top:0;right:0;bottom:0;border:1px solid #000"></div><div class="abs" style="left:1px;top:1px;right:1px;bottom:1px;border:1px solid #fff;background:#000"></div></div></div>
</div></body></html>
